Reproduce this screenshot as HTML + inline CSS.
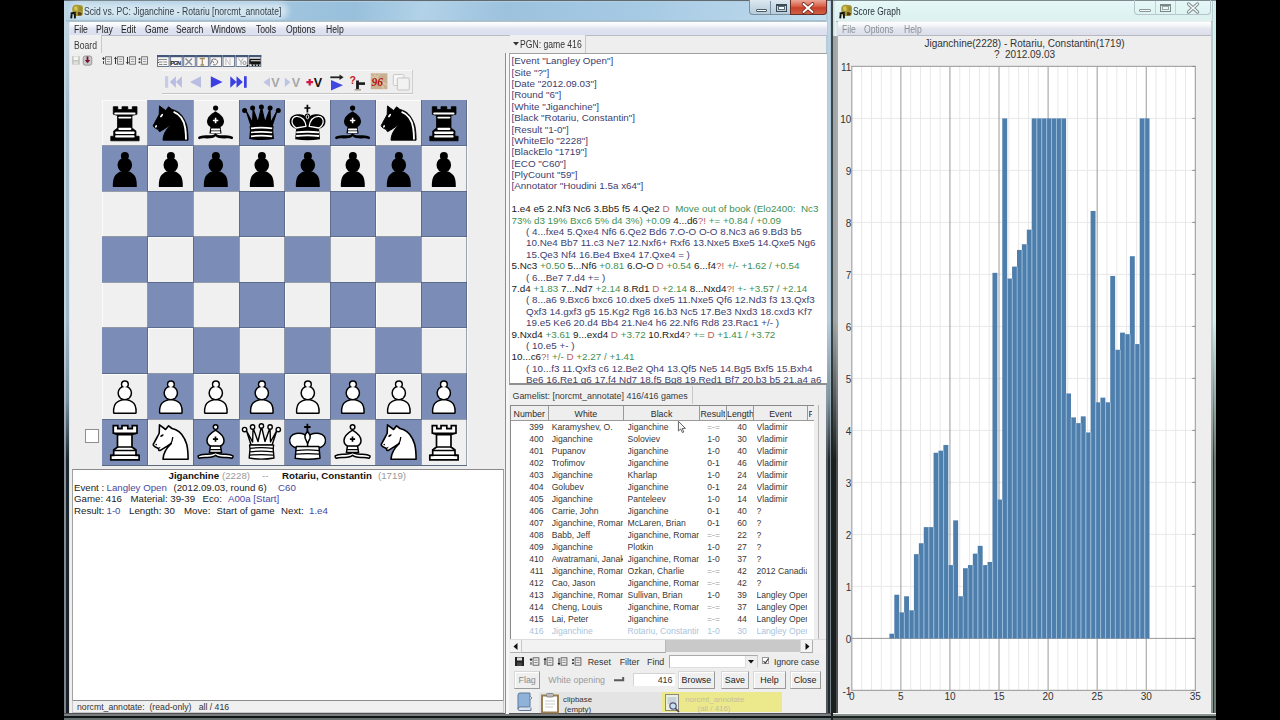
<!DOCTYPE html>
<html><head><meta charset="utf-8">
<style>
*{margin:0;padding:0;box-sizing:border-box}
html,body{width:1280px;height:720px;overflow:hidden;background:#000}
body{position:relative;font-family:"Liberation Sans",sans-serif;color:#222}
.a{position:absolute}
.t{position:absolute;white-space:nowrap;line-height:1.16}
svg{overflow:visible}
</style></head><body>
<div class="a" style="left:64px;top:0px;width:767px;height:720px;background:#a8c0d0;"></div>
<div class="a" style="left:64px;top:0px;width:2px;height:720px;background:linear-gradient(#c0d4e0 0,#c0d4e0 320px,#a8b4c0 400px,#8a8e98 460px,#7c8288 720px);"></div>
<div class="a" style="left:66px;top:0px;width:3px;height:720px;background:linear-gradient(#c8dce8 0,#b4cad8 60px,#a2bccc 110px,#9fb8c8 320px,#7890a0 400px,#1c2a30 460px,#1a2228 720px);"></div>
<div class="a" style="left:69px;top:0px;width:1px;height:720px;background:linear-gradient(#dce8ee,#dce4e8);"></div>
<div class="a" style="left:826px;top:0px;width:2px;height:720px;background:linear-gradient(#b4ccdc 0,#b4ccdc 320px,#8898a4 400px,#505558 460px,#505558 720px);"></div>
<div class="a" style="left:828px;top:0px;width:2px;height:720px;background:linear-gradient(#c8dce8 0,#b8d0e0 60px,#b8d0e0 320px,#7890a0 400px,#202830 460px,#202830 720px);"></div>
<div class="a" style="left:830px;top:0px;width:1px;height:720px;background:linear-gradient(#b0c8d8 0,#b0c8d8 320px,#98a8b0 400px,#7a8488 460px,#7a8488 720px);"></div>
<div class="a" style="left:64px;top:713px;width:767px;height:1px;background:#505050;"></div>
<div class="a" style="left:64px;top:714px;width:767px;height:2px;background:#7a7e80;"></div>
<div class="a" style="left:64px;top:716px;width:767px;height:2px;background:#0e1616;"></div>
<div class="a" style="left:64px;top:718px;width:767px;height:2px;background:#687070;"></div>
<div class="a" style="left:64px;top:0px;width:767px;height:1px;background:#5e6b72;"></div>
<div class="a" style="left:66px;top:1px;width:760px;height:1px;background:#b4cee0;"></div>
<div class="a" style="left:66px;top:2px;width:760px;height:19px;background:linear-gradient(100deg,#b4d2e6 0%,#a2c6e0 25%,#98c0dc 38%,#b2d2e8 47%,#9cc2de 58%,#a6cae4 75%,#b8d6ea 92%,#c4e0f0 100%);"></div>
<div class="a" style="left:70px;top:3px;width:218px;height:16px;background:#d4e6f0;filter:blur(3px);border-radius:8px"></div>
<svg class="a" style="left:68.5px;top:3px" width="16" height="16" viewBox="0 0 16 16"><path d="M4 3.2 Q5.5 1.4 8 1.8 L12.5 2.2 Q14.2 2.8 14 4.8 L13.8 11 Q13.6 12.6 12 12.8 L6.5 13 Q4.2 12.8 3.6 10.6 L3.2 6 Q3.2 4.2 4 3.2Z" fill="#a89838"/><path d="M5 4 Q6.5 2.8 8.2 3.4 L8.8 7.2 Q7 8.2 5.4 7.2Z" fill="#d6c650"/><path d="M9 9.2 Q11.5 8.6 13 10.6 L12.2 12.4 L8.8 12.4Z" fill="#5a3c18"/><path d="M10.5 3.5 L13 4.4 L12.6 8 L10.2 7.2Z" fill="#9a8a26"/><path d="M1.6 10.4 L6.8 9.8 M2.8 10.2 L2.2 15.4 M5.8 10 L6 15.4" stroke="#111" stroke-width="1.9" fill="none"/></svg>
<div class="t" style="left:84.3px;top:6.00px;font-size:10px;color:#34404a;transform:scaleX(0.86);transform-origin:0 0;">Scid vs. PC: Jiganchine - Rotariu [norcmt_annotate]</div>
<div class="a" style="left:749px;top:0px;width:78px;height:15px;background:linear-gradient(#dce8f0,#c8d8e4 50%,#b8ccdc);border:1px solid #7a8e9c;border-top:none;border-radius:0 0 4px 4px"></div>
<div class="a" style="left:790px;top:0px;width:37px;height:15px;background:linear-gradient(#eaa898,#d86048 45%,#c84028 55%,#d06048);border:1px solid #6a3028;border-top:none;border-radius:0 0 4px 0"></div>
<div class="a" style="left:770px;top:1px;width:1px;height:14px;background:#7890a0;"></div>
<div class="a" style="left:755.5px;top:8.5px;width:11px;height:3px;background:#fbfdff;border:1px solid #4a5a66;border-radius:1px"></div>
<div class="a" style="left:776px;top:3.5px;width:11px;height:8px;background:transparent;border:1px solid #3a4a56;border-top-width:2px"></div>
<div class="a" style="left:778px;top:6px;width:7px;height:4px;background:#f4f8fb;border:1px solid #5a6a76"></div>
<svg class="a" style="left:801px;top:3px" width="14" height="10" viewBox="0 0 14 10"><path d="M2.5 1 L11.5 9 M11.5 1 L2.5 9" stroke="#6a2418" stroke-width="3.6" stroke-linecap="round"/><path d="M2.5 1 L11.5 9 M11.5 1 L2.5 9" stroke="#fff" stroke-width="2" stroke-linecap="round"/></svg>
<div class="a" style="left:70px;top:21px;width:756px;height:692px;background:#eeeeee;"></div>
<div class="a" style="left:66px;top:19.5px;width:760px;height:2.5px;background:linear-gradient(#a4bccc,#b0c4d2);"></div>
<div class="a" style="left:70px;top:22px;width:757px;height:14px;background:linear-gradient(#ffffff,#f4f6fa 25%,#dfe2f0 55%,#dcdff0);border-bottom:1px solid #b8bcc4"></div>
<div class="t" style="left:73.7px;top:24.40px;font-size:10px;color:#1e1e1e;transform:scaleX(0.86);transform-origin:0 0;">File</div>
<div class="t" style="left:96px;top:24.40px;font-size:10px;color:#1e1e1e;transform:scaleX(0.86);transform-origin:0 0;">Play</div>
<div class="t" style="left:120.6px;top:24.40px;font-size:10px;color:#1e1e1e;transform:scaleX(0.86);transform-origin:0 0;">Edit</div>
<div class="t" style="left:144.5px;top:24.40px;font-size:10px;color:#1e1e1e;transform:scaleX(0.86);transform-origin:0 0;">Game</div>
<div class="t" style="left:176px;top:24.40px;font-size:10px;color:#1e1e1e;transform:scaleX(0.86);transform-origin:0 0;">Search</div>
<div class="t" style="left:211px;top:24.40px;font-size:10px;color:#1e1e1e;transform:scaleX(0.86);transform-origin:0 0;">Windows</div>
<div class="t" style="left:256.2px;top:24.40px;font-size:10px;color:#1e1e1e;transform:scaleX(0.86);transform-origin:0 0;">Tools</div>
<div class="t" style="left:285.7px;top:24.40px;font-size:10px;color:#1e1e1e;transform:scaleX(0.86);transform-origin:0 0;">Options</div>
<div class="t" style="left:325.5px;top:24.40px;font-size:10px;color:#1e1e1e;transform:scaleX(0.86);transform-origin:0 0;">Help</div>
<div class="a" style="left:831px;top:0px;width:2px;height:720px;background:linear-gradient(#3a4548 0,#3a4548 320px,#1a2020 460px,#1a2020 720px);"></div>
<div class="a" style="left:833px;top:0px;width:383px;height:720px;background:#c8dcdc;"></div>
<div class="a" style="left:833px;top:0px;width:3px;height:720px;background:linear-gradient(#a0a4a4 0,#a0a4a4 320px,#1a2020 460px,#1a2020 720px);"></div>
<div class="a" style="left:836px;top:0px;width:2px;height:720px;background:linear-gradient(#a8acac 0,#a8acac 320px,#505050 460px,#505050 720px);"></div>
<div class="a" style="left:1211px;top:0px;width:1.5px;height:720px;background:linear-gradient(#b8cccc 0,#b8cccc 320px,#8a9494 460px,#8a9494 720px);"></div>
<div class="a" style="left:1212.5px;top:0px;width:1.5px;height:720px;background:linear-gradient(#d8f4f4 0,#d8f4f4 320px,#283530 460px,#283530 720px);"></div>
<div class="a" style="left:1214px;top:0px;width:2px;height:720px;background:linear-gradient(#d0ecec 0,#d0ecec 320px,#6a7a70 460px,#6a7a70 720px);"></div>
<div class="a" style="left:833px;top:0px;width:5px;height:36px;background:linear-gradient(90deg,#c8d8d8,#e4f4f4 50%,#d0e0e0);"></div>
<div class="a" style="left:833px;top:713px;width:383px;height:1px;background:#f8f8f8;"></div>
<div class="a" style="left:833px;top:714px;width:383px;height:2px;background:#8a9292;"></div>
<div class="a" style="left:833px;top:716px;width:383px;height:2px;background:#1c2420;"></div>
<div class="a" style="left:833px;top:718px;width:383px;height:2px;background:#586060;"></div>
<div class="a" style="left:833px;top:0px;width:383px;height:1px;background:#7d8b90;"></div>
<div class="a" style="left:836px;top:1px;width:376px;height:20px;background:linear-gradient(#e6f8f8,#e0f4f4 50%,#dcf0f0);"></div>
<div class="a" style="left:836px;top:21px;width:376px;height:1px;background:#a8b8b8;"></div>
<svg class="a" style="left:837.5px;top:3px" width="16" height="16" viewBox="0 0 16 16"><path d="M4 3.2 Q5.5 1.4 8 1.8 L12.5 2.2 Q14.2 2.8 14 4.8 L13.8 11 Q13.6 12.6 12 12.8 L6.5 13 Q4.2 12.8 3.6 10.6 L3.2 6 Q3.2 4.2 4 3.2Z" fill="#a89838"/><path d="M5 4 Q6.5 2.8 8.2 3.4 L8.8 7.2 Q7 8.2 5.4 7.2Z" fill="#d6c650"/><path d="M9 9.2 Q11.5 8.6 13 10.6 L12.2 12.4 L8.8 12.4Z" fill="#5a3c18"/><path d="M10.5 3.5 L13 4.4 L12.6 8 L10.2 7.2Z" fill="#9a8a26"/><path d="M1.6 10.4 L6.8 9.8 M2.8 10.2 L2.2 15.4 M5.8 10 L6 15.4" stroke="#111" stroke-width="1.9" fill="none"/></svg>
<div class="t" style="left:852.5px;top:6.00px;font-size:10px;color:#2a3439;transform:scaleX(0.84);transform-origin:0 0;">Score Graph</div>
<div class="a" style="left:1134px;top:0px;width:77px;height:15px;background:transparent;border:1px solid #b4c4c8;border-top:none;border-radius:0 0 4px 4px"></div>
<div class="a" style="left:1154.5px;top:1px;width:1px;height:14px;background:#c0d0d4;"></div>
<div class="a" style="left:1175px;top:1px;width:1px;height:14px;background:#c0d0d4;"></div>
<div class="a" style="left:1138.5px;top:8.5px;width:12px;height:3px;background:#f4f8f8;border:1px solid #8a9898;border-radius:1px"></div>
<div class="a" style="left:1159.5px;top:3.5px;width:11px;height:8px;background:transparent;border:1px solid #7a8888;border-top-width:2px"></div>
<div class="a" style="left:1161.5px;top:6px;width:7px;height:4px;background:#f2f8f8;border:1px solid #9aa8a8"></div>
<svg class="a" style="left:1186px;top:3px" width="14" height="10" viewBox="0 0 14 10"><path d="M2.5 1 L11.5 9 M11.5 1 L2.5 9" stroke="#7d8a8a" stroke-width="3.4" stroke-linecap="round"/><path d="M2.5 1 L11.5 9 M11.5 1 L2.5 9" stroke="#f4f8f8" stroke-width="1.6" stroke-linecap="round"/></svg>
<div class="a" style="left:838px;top:21px;width:373px;height:692px;background:#eeeeee;"></div>
<div class="a" style="left:838px;top:22px;width:373px;height:14px;background:linear-gradient(#ffffff,#f4f6f8 25%,#e2e4ee 55%,#dcdfea);border-bottom:1px solid #b4b8c0"></div>
<div class="t" style="left:842px;top:24.00px;font-size:10px;color:#8a9196;transform:scaleX(0.86);transform-origin:0 0;">File</div>
<div class="t" style="left:864px;top:24.00px;font-size:10px;color:#8a9196;transform:scaleX(0.86);transform-origin:0 0;">Options</div>
<div class="t" style="left:904px;top:24.00px;font-size:10px;color:#8a9196;transform:scaleX(0.86);transform-origin:0 0;">Help</div>
<svg width="0" height="0" style="position:absolute"><defs>
<symbol id="br" viewBox="0 0 45.6 45.6"><path d="M8.8 40.8 L37.1 40.8 L37.1 36.3 L34 36.3 L34 31 L30 28 L30 15.5 L35 14.2 L35 6.7 L30.3 6.7 L30.3 9.6 L25.8 9.6 L25.8 6.7 L20 6.7 L20 9.6 L15.8 9.6 L15.8 6.7 L11.3 6.7 L11.3 14.2 L15.5 15.5 L15.5 28 L11.7 31 L11.7 36.3 L8.8 36.3 Z" fill="#000" stroke="#000" stroke-width="0.8" stroke-linejoin="round"/><rect x="12.3" y="12.4" width="21.2" height="2.1999999999999993" rx="0.8" fill="#fff"/><rect x="16.4" y="16.7" width="13.0" height="1.9000000000000021" rx="0.8" fill="#fff"/><rect x="16.4" y="27.8" width="13.0" height="2.099999999999998" rx="0.8" fill="#fff"/><rect x="13.2" y="31.4" width="19.400000000000002" height="2.5" rx="0.8" fill="#fff"/><rect x="13.2" y="35.3" width="19.400000000000002" height="2.3000000000000043" rx="0.8" fill="#fff"/></symbol>
<symbol id="wr" viewBox="0 0 45.6 45.6"><path d="M8.8 40.8 L37.1 40.8 L37.1 36.3 L34 36.3 L34 31 L30 28 L30 15.5 L35 14.2 L35 6.7 L30.3 6.7 L30.3 9.6 L25.8 9.6 L25.8 6.7 L20 6.7 L20 9.6 L15.8 9.6 L15.8 6.7 L11.3 6.7 L11.3 14.2 L15.5 15.5 L15.5 28 L11.7 31 L11.7 36.3 L8.8 36.3 Z" fill="#fff" stroke="#000" stroke-width="1.7" stroke-linejoin="miter"/><path d="M11.3 14.2 L35 14.2 M15.5 15.8 L30 15.8 M15.5 28 L30 28 M11.7 31.4 L34 31.4 M8.8 36.3 L37.1 36.3" stroke="#000" stroke-width="1.5" fill="none"/></symbol>
<symbol id="bn" viewBox="0 0 45.6 45.6"><path d="M15 40.2 C15.2 34 18 29.5 23.3 24.5 C20 26.5 15 30 12 31.5 C11 31.8 10.6 31 10.5 29.6 C8.5 28.8 6.2 27.8 5.4 26.4 C5 25.2 5.4 24.5 6.1 23.9 C8 20 10 17 11.2 14.3 L11.5 5.9 L17.6 10.5 L20.6 6.8 L24 9.5 C26 10 27 10.5 27.8 10.8 C32 12.5 36 17 38.7 25.2 C39.6 29 40.1 34 40.1 40.2 Z" fill="#000" stroke="#000" stroke-width="0.9" stroke-linejoin="round"/><path d="M25.6 11.8 C31.5 14 36 20 37.2 28 C37.8 32 38 36 38 39.4" stroke="#fff" stroke-width="1.9" fill="none"/><ellipse cx="13.6" cy="15.6" rx="0.9" ry="2.1" transform="rotate(40 13.6 15.6)" fill="#fff"/><ellipse cx="8" cy="26.4" rx="0.9" ry="1.4" transform="rotate(30 8 26.4)" fill="#fff"/></symbol>
<symbol id="wn" viewBox="0 0 45.6 45.6"><path d="M15 40.2 C15.2 34 18 29.5 23.3 24.5 C20 26.5 15 30 12 31.5 C11 31.8 10.6 31 10.5 29.6 C8.5 28.8 6.2 27.8 5.4 26.4 C5 25.2 5.4 24.5 6.1 23.9 C8 20 10 17 11.2 14.3 L11.5 5.9 L17.6 10.5 L20.6 6.8 L24 9.5 C26 10 27 10.5 27.8 10.8 C32 12.5 36 17 38.7 25.2 C39.6 29 40.1 34 40.1 40.2 Z" fill="#fff" stroke="#000" stroke-width="1.6" stroke-linejoin="round"/><path d="M24.8 18 C24.6 20.5 24 22.8 22.6 24.8" stroke="#000" stroke-width="1.3" fill="none"/><ellipse cx="14" cy="16.6" rx="0.9" ry="2" transform="rotate(55 14 16.6)" fill="#000"/><circle cx="8.2" cy="25.6" r="0.8" fill="#000"/><path d="M10.6 29.2 L12.3 28.4" stroke="#000" stroke-width="1"/></symbol>
<symbol id="bb" viewBox="0 0 45.6 45.6"><circle cx="22.6" cy="8.1" r="2.6" fill="#000"/><path d="M22.5 11.2 C17.5 14.2 14 17.5 14 21.6 C14 24.8 16 26.4 17.6 27 L27.4 27 C29 26.4 31 24.8 31 21.6 C31 17.5 27.5 14.2 22.5 11.2 Z" fill="#000"/><path d="M17.5 26.6 L27.5 26.6 L28.6 33.6 L16.4 33.6 Z" fill="#000"/><path d="M22.1 33.4 C20.8 35.5 17 35.1 12.5 35.2 C9.5 35.3 7 35.7 5.2 36.9 C5 37.8 5.4 38.8 6.2 39.3 C8 38.5 10 38.3 13 38.4 C17.5 38.5 21.3 38.1 22.6 36.3 C23.9 38.1 27.7 38.5 32.2 38.4 C35.2 38.3 37.2 38.5 39 39.3 C39.8 38.8 40.2 37.8 40 36.9 C38.2 35.7 35.7 35.3 32.7 35.2 C28.2 35.1 24.4 35.5 23.1 33.4 Z" fill="#000"/><path d="M22.6 17.8 L22.6 23.2 M19.9 20.5 L25.3 20.5" stroke="#fff" stroke-width="1.6"/><rect x="18" y="28.6" width="9.2" height="1.9" rx="0.7" fill="#fff"/><rect x="17.8" y="31.3" width="9.6" height="1.7" rx="0.7" fill="#fff"/></symbol>
<symbol id="wb" viewBox="0 0 45.6 45.6"><g fill="#fff" stroke="#000" stroke-width="1.5" stroke-linejoin="round"><path d="M22.1 33.4 C20.8 35.5 17 35.1 12.5 35.2 C9.5 35.3 7 35.7 5.2 36.9 C5 37.8 5.4 38.8 6.2 39.3 C8 38.5 10 38.3 13 38.4 C17.5 38.5 21.3 38.1 22.6 36.3 C23.9 38.1 27.7 38.5 32.2 38.4 C35.2 38.3 37.2 38.5 39 39.3 C39.8 38.8 40.2 37.8 40 36.9 C38.2 35.7 35.7 35.3 32.7 35.2 C28.2 35.1 24.4 35.5 23.1 33.4 Z"/><path d="M17.5 26.6 L27.5 26.6 L28.6 33.6 L16.4 33.6 Z"/><path d="M22.5 11.2 C17.5 14.2 14 17.5 14 21.6 C14 24.8 16 26.4 17.6 27 L27.4 27 C29 26.4 31 24.8 31 21.6 C31 17.5 27.5 14.2 22.5 11.2 Z"/><circle cx="22.6" cy="8.1" r="2.3"/></g><path d="M22.5 17.6 L22.5 22.8 M19.9 20.2 L25.1 20.2" stroke="#000" stroke-width="1.7"/><path d="M16.9 30.6 L28.3 30.6" stroke="#000" stroke-width="1.3"/></symbol>
<symbol id="bq" viewBox="0 0 45.6 45.6"><path d="M7.4 11.5 L12.2 26.2 L33 26.2 L37.8 11.5 L31.5 23 L31 9 L26 22.5 L22.5 7.5 L19 22.5 L14.1 9 L13.6 23 Z" fill="#000" stroke="#000" stroke-width="1.2" stroke-linejoin="round"/><path d="M10.6 26 L34.6 26 L34.2 30 L35 39 C27 40.5 18 40.5 10.2 39 L11 30 Z" fill="#000"/><circle cx="5.6" cy="10.6" r="2.5" fill="#000"/><circle cx="13.6" cy="8.0" r="2.5" fill="#000"/><circle cx="22.4" cy="6.9" r="2.5" fill="#000"/><circle cx="31.1" cy="8.0" r="2.5" fill="#000"/><circle cx="39.3" cy="10.6" r="2.5" fill="#000"/><path d="M12 28.3 C18 27.5 27 27.5 33.2 28.3" stroke="#fff" stroke-width="1.7" fill="none"/><path d="M12 32.5 C18 31.7 27 31.7 33.2 32.5" stroke="#fff" stroke-width="1.7" fill="none"/><path d="M12 36.3 C18 35.5 27 35.5 33.2 36.3" stroke="#fff" stroke-width="1.7" fill="none"/></symbol>
<symbol id="wq" viewBox="0 0 45.6 45.6"><g fill="#fff" stroke="#000" stroke-width="1.4" stroke-linejoin="round"><path d="M7.4 11.5 L12.2 26.2 L33 26.2 L37.8 11.5 L31.5 23 L31 9 L26 22.5 L22.5 7.5 L19 22.5 L14.1 9 L13.6 23 Z"/><path d="M10.6 26 L34.6 26 L34.2 30 L35 39 C27 40.5 18 40.5 10.2 39 L11 30 Z"/><circle cx="5.6" cy="10.6" r="2.2"/><circle cx="13.6" cy="8.0" r="2.2"/><circle cx="22.4" cy="6.9" r="2.2"/><circle cx="31.1" cy="8.0" r="2.2"/><circle cx="39.3" cy="10.6" r="2.2"/></g><path d="M11 29.3 C18 28.5 27 28.5 34.2 29.3" stroke="#000" stroke-width="1.3" fill="none"/><path d="M11 32.8 C18 31.999999999999996 27 31.999999999999996 34.2 32.8" stroke="#000" stroke-width="1.3" fill="none"/><path d="M11 36.2 C18 35.400000000000006 27 35.400000000000006 34.2 36.2" stroke="#000" stroke-width="1.3" fill="none"/></symbol>
<symbol id="bk" viewBox="0 0 45.6 45.6"><path d="M22.4 4.8 L22.4 12.5 M19.4 8 L25.4 8" stroke="#000" stroke-width="1.7"/><ellipse cx="22.5" cy="16.8" rx="2.8" ry="3.4" fill="#000"/><path d="M22.6 27 L22.6 19 C20.5 14.5 15.5 13.8 11 14.4 C6.2 15.2 3.8 19 5 23.6 C5.8 26.4 8.6 28 11 29 L34.2 29 C36.6 28 39.4 26.4 40.2 23.6 C41.4 19 39 15.2 34.2 14.4 C29.7 13.8 24.7 14.5 22.6 19 Z" fill="#000"/><path d="M11.2 27.6 L34 27.6 L35 39.3 C27 40.6 18 40.6 10.2 39.3 Z" fill="#000"/><path d="M21 26.4 C20.4 21.2 17.4 16.8 12 16.4 C8.3 16.2 6.4 19.5 7.1 22.8 C7.7 25.3 9.5 27 11 28 Z" stroke="#fff" stroke-width="1.3" fill="none" stroke-linejoin="round"/><path d="M24.2 26.4 C24.8 21.2 27.8 16.8 33.2 16.4 C36.9 16.2 38.8 19.5 38.1 22.8 C37.5 25.3 35.7 27 34.2 28 Z" stroke="#fff" stroke-width="1.3" fill="none" stroke-linejoin="round"/><ellipse cx="22.5" cy="16.9" rx="1.3" ry="1.9" fill="none" stroke="#fff" stroke-width="0.9"/><path d="M11.2 32.4 C18 31.599999999999998 27 31.599999999999998 34 32.4" stroke="#fff" stroke-width="1.8" fill="none"/><path d="M11.2 36.0 C18 35.2 27 35.2 34 36.0" stroke="#fff" stroke-width="1.8" fill="none"/></symbol>
<symbol id="wk" viewBox="0 0 45.6 45.6"><path d="M22.4 4.8 L22.4 13 M19.2 8 L25.6 8" stroke="#000" stroke-width="1.8"/><g fill="#fff" stroke="#000" stroke-width="1.5" stroke-linejoin="round"><path d="M22.6 27 L22.6 19 C20.5 14.5 15.5 13.8 11 14.4 C6.2 15.2 3.8 19 5 23.6 C5.8 26.4 8.6 28 11 29 L34.2 29 C36.6 28 39.4 26.4 40.2 23.6 C41.4 19 39 15.2 34.2 14.4 C29.7 13.8 24.7 14.5 22.6 19 Z"/><path d="M22.5 12.6 C20.5 14.5 19.6 17 20.2 19.2 L22.6 24.5 L25 19.2 C25.5 17 24.6 14.5 22.5 12.6 Z"/><path d="M11.2 27.6 L34 27.6 L35 39.3 C27 40.6 18 40.6 10.2 39.3 Z"/></g><path d="M10.8 31.6 C18 30.8 27 30.8 34.4 31.6" stroke="#000" stroke-width="1.2" fill="none"/><path d="M10.8 35.2 C18 34.400000000000006 27 34.400000000000006 34.4 35.2" stroke="#000" stroke-width="1.2" fill="none"/></symbol>
<symbol id="bp" viewBox="0 0 45.6 45.6"><g fill="#000"><circle cx="22.9" cy="10.0" r="4.0"/><circle cx="22.8" cy="19.0" r="7.3"/><path d="M10.90 41.00 C10.70 35.91 11.38 29.87 14.96 27.64 C17.59 25.58 19.50 25.10 22.85 25.10 C26.20 25.10 28.11 25.58 30.74 27.64 C34.32 29.87 35.00 35.91 34.80 41.00 Z"/></g></symbol>
<symbol id="wp" viewBox="0 0 45.6 45.6"><g fill="#000" stroke="#000" stroke-width="3.0" stroke-linejoin="round"><circle cx="22.9" cy="10.3" r="2.6"/><circle cx="22.8" cy="19.0" r="5.9"/><path d="M12.40 38.60 C12.20 34.76 12.82 30.20 15.95 28.52 C18.25 26.96 19.92 26.60 22.85 26.60 C25.78 26.60 27.45 26.96 29.75 28.52 C32.88 30.20 33.50 34.76 33.30 38.60 Z"/></g><g fill="#fff"><circle cx="22.9" cy="10.3" r="2.6"/><circle cx="22.8" cy="19.0" r="5.9"/><path d="M12.40 38.60 C12.20 34.76 12.82 30.20 15.95 28.52 C18.25 26.96 19.92 26.60 22.85 26.60 C25.78 26.60 27.45 26.96 29.75 28.52 C32.88 30.20 33.50 34.76 33.30 38.60 Z"/></g></symbol>
</defs></svg>
<div class="a" style="left:70px;top:35px;width:32px;height:18px;background:#f0f0f0;border-right:1px solid #c8c8c8"></div>
<div class="t" style="left:74px;top:39.60px;font-size:10px;color:#3a3a3a;transform:scaleX(0.86);transform-origin:0 0;">Board</div>
<svg class="a" style="left:71px;top:55px" width="22" height="11" viewBox="0 0 22 11"><rect x="1" y="1.2" width="7.8" height="8.4" fill="#c4c8c0"/><rect x="2.6" y="1.6" width="4.6" height="3.4" fill="#f4f4f4"/><rect x="2.8" y="6.6" width="4" height="2.6" fill="#e0e0e0"/><rect x="12.2" y="1" width="8.6" height="9.2" rx="2" fill="#c8c8c8" stroke="#8a8a8a" stroke-width="0.8"/><path d="M16.5 1.5 V7" stroke="#7a1030" stroke-width="1.8"/><path d="M13.8 5 L16.5 8.3 L19.2 5Z" fill="#7a1030"/></svg>
<svg class="a" style="left:101.6px;top:56px" width="10" height="9" viewBox="0 0 10 9"><rect x="3.6" y="0.8" width="5.8" height="7.4" fill="#f4f4f4" stroke="#666" stroke-width="0.9"/><path d="M4.8 3.2h3.4M4.8 5.6h3.4" stroke="#888" stroke-width="0.9"/><path d="M0.3 2.6h2.4M1.5 1.2v2.8M1.5 5.2v2.6" stroke="#333" stroke-width="1"/></svg>
<svg class="a" style="left:113.9px;top:56px" width="10" height="9" viewBox="0 0 10 9"><rect x="3.6" y="0.8" width="5.8" height="7.4" fill="#f4f4f4" stroke="#666" stroke-width="0.9"/><path d="M4.8 3.2h3.4M4.8 5.6h3.4" stroke="#888" stroke-width="0.9"/><path d="M1.5 8v-6" stroke="#333" stroke-width="1"/><path d="M0 3 L1.5 0.6 L3 3Z" fill="#333"/></svg>
<svg class="a" style="left:125.6px;top:56px" width="10" height="9" viewBox="0 0 10 9"><rect x="3.6" y="0.8" width="5.8" height="7.4" fill="#f4f4f4" stroke="#666" stroke-width="0.9"/><path d="M4.8 3.2h3.4M4.8 5.6h3.4" stroke="#888" stroke-width="0.9"/><path d="M1.5 1v6" stroke="#333" stroke-width="1"/><path d="M0 6 L1.5 8.4 L3 6Z" fill="#333"/></svg>
<svg class="a" style="left:138px;top:56px" width="10" height="9" viewBox="0 0 10 9"><rect x="3.6" y="0.8" width="5.8" height="7.4" fill="#f4f4f4" stroke="#666" stroke-width="0.9"/><path d="M4.8 3.2h3.4M4.8 5.6h3.4" stroke="#888" stroke-width="0.9"/><circle cx="1.5" cy="3" r="1" fill="#333"/><circle cx="1.5" cy="6.2" r="1" fill="#333"/></svg>
<svg class="a" style="left:157px;top:55px" width="106" height="12" viewBox="0 0 106 12"><rect x="0.5" y="0.5" width="11.6" height="11" fill="#f6f6f6" stroke="#6a7890" stroke-width="1"/><rect x="0.0" y="0" width="12.6" height="2.2" fill="#46587a"/><rect x="13.6" y="0.5" width="11.6" height="11" fill="#f6f6f6" stroke="#6a7890" stroke-width="1"/><rect x="13.1" y="0" width="12.6" height="2.2" fill="#46587a"/><rect x="26.7" y="0.5" width="11.6" height="11" fill="#f6f6f6" stroke="#6a7890" stroke-width="1"/><rect x="26.2" y="0" width="12.6" height="2.2" fill="#46587a"/><rect x="39.8" y="0.5" width="11.6" height="11" fill="#f6f6f6" stroke="#6a7890" stroke-width="1"/><rect x="39.3" y="0" width="12.6" height="2.2" fill="#46587a"/><rect x="52.9" y="0.5" width="11.6" height="11" fill="#f6f6f6" stroke="#6a7890" stroke-width="1"/><rect x="52.4" y="0" width="12.6" height="2.2" fill="#46587a"/><rect x="66.0" y="0.5" width="11.6" height="11" fill="#f6f6f6" stroke="#6a7890" stroke-width="1"/><rect x="65.5" y="0" width="12.6" height="2.2" fill="#46587a"/><rect x="79.1" y="0.5" width="11.6" height="11" fill="#f6f6f6" stroke="#6a7890" stroke-width="1"/><rect x="78.6" y="0" width="12.6" height="2.2" fill="#46587a"/><rect x="92.2" y="0.5" width="11.6" height="11" fill="#f6f6f6" stroke="#6a7890" stroke-width="1"/><rect x="91.7" y="0" width="12.6" height="2.2" fill="#46587a"/><path d="M2 4.5h8M2 7h3.5M6.5 7h3.5M2 9.5h3.5M6.5 9.5h3.5" stroke="#8a8a8a" stroke-width="1"/><path d="M1.3 4.5v5" stroke="#333" stroke-width="1" stroke-dasharray="1 1.5"/><text x="13.6" y="9.6" font-size="5.6" font-weight="bold" fill="#111" font-family="Liberation Sans" textLength="10.5">PGN</text><path d="M28.5 3.5 L35 10 M35 3.5 L28.5 10" stroke="#8a9098" stroke-width="1.5"/><path d="M42.7 3.5h5.2M45.3 3.5v6.5M43.5 10h3.6" stroke="#a89058" stroke-width="1.3"/><path d="M54.5 5 A3.5 3 0 1 1 56 9.8 M53.5 9 L55 5.5 L57 8" stroke="#777" stroke-width="1" fill="none"/><path d="M68.8 3.5v6.5M68.8 3.5 L73 10 V3.5" stroke="#c8c0c0" stroke-width="1" fill="none"/><path d="M81.5 3.5 L84 7 L86 3.5 M84 7v3" stroke="#aaa" stroke-width="1" fill="none"/><circle cx="87.5" cy="8" r="1.6" fill="none" stroke="#888" stroke-width="0.9"/><circle cx="90.4" cy="10.6" r="0.9" fill="#111"/><path d="M93 4.5h10.5M93 4.5v4.5M93 7h10.5" stroke="#111" stroke-width="1.4" fill="none"/><rect x="93.5" y="7" width="10" height="2.5" fill="#111"/><circle cx="95.5" cy="10.2" r="0.9" fill="#111"/><circle cx="98.5" cy="10.2" r="0.9" fill="#111"/><circle cx="101.5" cy="10.2" r="0.9" fill="#111"/></svg>
<div class="a" style="left:162px;top:69.5px;width:251px;height:1px;background:#f8f8f8;"></div>
<div class="a" style="left:162px;top:92.5px;width:251px;height:1px;background:#c4c4c4;"></div>
<div class="a" style="left:162px;top:93.5px;width:251px;height:1px;background:#fafafa;"></div>
<div class="a" style="left:412px;top:70px;width:1px;height:23px;background:#d0d0d0;"></div>
<svg class="a" style="left:162px;top:71px" width="251" height="23" viewBox="0 0 251 23"><rect x="3" y="5.2" width="3.2" height="11.6" fill="#c8cbe6"/><path d="M13.9 5.2 L7.8 11 L13.9 16.8Z M19.9 5.2 L13.9 11 L19.9 16.8Z" fill="#b9bde2"/><path d="M39 5.2 L28 11 L39 16.8Z" fill="#b9bde2"/><path d="M48.8 5.2 L60.5 11 L48.8 16.8Z" fill="#3c40e0"/><path d="M68.3 5.2 L74.5 11 L68.3 16.8Z M74.5 5.2 L80.8 11 L74.5 16.8Z" fill="#3c40e0"/><rect x="82" y="5.2" width="2.7" height="11.6" fill="#3c40e0"/><path d="M108 6.5 L101.3 11.2 L108 16Z" fill="#c0c4e4"/><text x="109.2" y="16.2" font-size="12.6" font-weight="bold" fill="#a8a8a8" font-family="Liberation Sans">V</text><path d="M122.8 6.5 L128.5 11.2 L122.8 16Z" fill="#c0c4e4"/><text x="129.8" y="16.2" font-size="12.6" font-weight="bold" fill="#a8a8a8" font-family="Liberation Sans">V</text><path d="M144.4 11.2h6.6 M147.7 8v6.6" stroke="#d01848" stroke-width="2.2"/><text x="151.7" y="16.2" font-size="12.6" font-weight="bold" fill="#111" font-family="Liberation Sans">V</text><path d="M168.3 6.3h10.5" stroke="#222" stroke-width="1.8"/><path d="M177.5 3.6 L181.6 6.3 L177.5 9Z" fill="#222"/><path d="M169 9 L181 14.3 L169 19.6Z" fill="#4048e4"/><text x="187.5" y="13.2" font-size="10.5" font-weight="bold" fill="#c41c1c" font-family="Liberation Sans">?</text><path d="M195.5 9.5v8.5" stroke="#1a1a1a" stroke-width="2.8"/><path d="M195.5 12.6h7.5" stroke="#1a1a1a" stroke-width="2.6"/><path d="M192.5 18.8h6.5" stroke="#a09a80" stroke-width="1.4"/><rect x="208.8" y="2.3" width="16.6" height="15.9" fill="#c9b090"/><path d="M209 5 L225 14 M212 2.5 L222 18 M209 12 L218 3" stroke="#d8c8a8" stroke-width="1.5"/><text x="209.6" y="14.5" font-size="11.5" font-weight="bold" font-style="italic" fill="#b41414" font-family="Liberation Serif">96</text><rect x="231.3" y="3.5" width="10.5" height="11" rx="1" fill="#f6f6f6" stroke="#c8c8c8"/><rect x="235.3" y="7" width="12" height="12" rx="1" fill="#f2f2f2" stroke="#c4c4c4"/></svg>
<div class="a" style="left:101.6px;top:99.5px;width:365.8px;height:366.2px;background:#5c6a80;"></div>
<div class="a" style="left:467.2px;top:100px;width:1.3px;height:366px;background:#fafafa;"></div>
<div class="a" style="left:102.35px;top:100.20px;width:45.95px;height:45.95px;background:#f0f0f0;box-shadow:inset 1px 1px 0 #fbfbfb"></div>
<div class="a" style="left:147.90px;top:100.20px;width:45.95px;height:45.95px;background:#7b8db6"></div>
<div class="a" style="left:193.45px;top:100.20px;width:45.95px;height:45.95px;background:#f0f0f0;box-shadow:inset 1px 1px 0 #fbfbfb"></div>
<div class="a" style="left:239.00px;top:100.20px;width:45.95px;height:45.95px;background:#7b8db6"></div>
<div class="a" style="left:284.55px;top:100.20px;width:45.95px;height:45.95px;background:#f0f0f0;box-shadow:inset 1px 1px 0 #fbfbfb"></div>
<div class="a" style="left:330.10px;top:100.20px;width:45.95px;height:45.95px;background:#7b8db6"></div>
<div class="a" style="left:375.65px;top:100.20px;width:45.95px;height:45.95px;background:#f0f0f0;box-shadow:inset 1px 1px 0 #fbfbfb"></div>
<div class="a" style="left:421.20px;top:100.20px;width:45.95px;height:45.95px;background:#7b8db6"></div>
<div class="a" style="left:102.35px;top:145.75px;width:45.95px;height:45.95px;background:#7b8db6"></div>
<div class="a" style="left:147.90px;top:145.75px;width:45.95px;height:45.95px;background:#f0f0f0;box-shadow:inset 1px 1px 0 #fbfbfb"></div>
<div class="a" style="left:193.45px;top:145.75px;width:45.95px;height:45.95px;background:#7b8db6"></div>
<div class="a" style="left:239.00px;top:145.75px;width:45.95px;height:45.95px;background:#f0f0f0;box-shadow:inset 1px 1px 0 #fbfbfb"></div>
<div class="a" style="left:284.55px;top:145.75px;width:45.95px;height:45.95px;background:#7b8db6"></div>
<div class="a" style="left:330.10px;top:145.75px;width:45.95px;height:45.95px;background:#f0f0f0;box-shadow:inset 1px 1px 0 #fbfbfb"></div>
<div class="a" style="left:375.65px;top:145.75px;width:45.95px;height:45.95px;background:#7b8db6"></div>
<div class="a" style="left:421.20px;top:145.75px;width:45.95px;height:45.95px;background:#f0f0f0;box-shadow:inset 1px 1px 0 #fbfbfb"></div>
<div class="a" style="left:102.35px;top:191.30px;width:45.95px;height:45.95px;background:#f0f0f0;box-shadow:inset 1px 1px 0 #fbfbfb"></div>
<div class="a" style="left:147.90px;top:191.30px;width:45.95px;height:45.95px;background:#7b8db6"></div>
<div class="a" style="left:193.45px;top:191.30px;width:45.95px;height:45.95px;background:#f0f0f0;box-shadow:inset 1px 1px 0 #fbfbfb"></div>
<div class="a" style="left:239.00px;top:191.30px;width:45.95px;height:45.95px;background:#7b8db6"></div>
<div class="a" style="left:284.55px;top:191.30px;width:45.95px;height:45.95px;background:#f0f0f0;box-shadow:inset 1px 1px 0 #fbfbfb"></div>
<div class="a" style="left:330.10px;top:191.30px;width:45.95px;height:45.95px;background:#7b8db6"></div>
<div class="a" style="left:375.65px;top:191.30px;width:45.95px;height:45.95px;background:#f0f0f0;box-shadow:inset 1px 1px 0 #fbfbfb"></div>
<div class="a" style="left:421.20px;top:191.30px;width:45.95px;height:45.95px;background:#7b8db6"></div>
<div class="a" style="left:102.35px;top:236.85px;width:45.95px;height:45.95px;background:#7b8db6"></div>
<div class="a" style="left:147.90px;top:236.85px;width:45.95px;height:45.95px;background:#f0f0f0;box-shadow:inset 1px 1px 0 #fbfbfb"></div>
<div class="a" style="left:193.45px;top:236.85px;width:45.95px;height:45.95px;background:#7b8db6"></div>
<div class="a" style="left:239.00px;top:236.85px;width:45.95px;height:45.95px;background:#f0f0f0;box-shadow:inset 1px 1px 0 #fbfbfb"></div>
<div class="a" style="left:284.55px;top:236.85px;width:45.95px;height:45.95px;background:#7b8db6"></div>
<div class="a" style="left:330.10px;top:236.85px;width:45.95px;height:45.95px;background:#f0f0f0;box-shadow:inset 1px 1px 0 #fbfbfb"></div>
<div class="a" style="left:375.65px;top:236.85px;width:45.95px;height:45.95px;background:#7b8db6"></div>
<div class="a" style="left:421.20px;top:236.85px;width:45.95px;height:45.95px;background:#f0f0f0;box-shadow:inset 1px 1px 0 #fbfbfb"></div>
<div class="a" style="left:102.35px;top:282.40px;width:45.95px;height:45.95px;background:#f0f0f0;box-shadow:inset 1px 1px 0 #fbfbfb"></div>
<div class="a" style="left:147.90px;top:282.40px;width:45.95px;height:45.95px;background:#7b8db6"></div>
<div class="a" style="left:193.45px;top:282.40px;width:45.95px;height:45.95px;background:#f0f0f0;box-shadow:inset 1px 1px 0 #fbfbfb"></div>
<div class="a" style="left:239.00px;top:282.40px;width:45.95px;height:45.95px;background:#7b8db6"></div>
<div class="a" style="left:284.55px;top:282.40px;width:45.95px;height:45.95px;background:#f0f0f0;box-shadow:inset 1px 1px 0 #fbfbfb"></div>
<div class="a" style="left:330.10px;top:282.40px;width:45.95px;height:45.95px;background:#7b8db6"></div>
<div class="a" style="left:375.65px;top:282.40px;width:45.95px;height:45.95px;background:#f0f0f0;box-shadow:inset 1px 1px 0 #fbfbfb"></div>
<div class="a" style="left:421.20px;top:282.40px;width:45.95px;height:45.95px;background:#7b8db6"></div>
<div class="a" style="left:102.35px;top:327.95px;width:45.95px;height:45.95px;background:#7b8db6"></div>
<div class="a" style="left:147.90px;top:327.95px;width:45.95px;height:45.95px;background:#f0f0f0;box-shadow:inset 1px 1px 0 #fbfbfb"></div>
<div class="a" style="left:193.45px;top:327.95px;width:45.95px;height:45.95px;background:#7b8db6"></div>
<div class="a" style="left:239.00px;top:327.95px;width:45.95px;height:45.95px;background:#f0f0f0;box-shadow:inset 1px 1px 0 #fbfbfb"></div>
<div class="a" style="left:284.55px;top:327.95px;width:45.95px;height:45.95px;background:#7b8db6"></div>
<div class="a" style="left:330.10px;top:327.95px;width:45.95px;height:45.95px;background:#f0f0f0;box-shadow:inset 1px 1px 0 #fbfbfb"></div>
<div class="a" style="left:375.65px;top:327.95px;width:45.95px;height:45.95px;background:#7b8db6"></div>
<div class="a" style="left:421.20px;top:327.95px;width:45.95px;height:45.95px;background:#f0f0f0;box-shadow:inset 1px 1px 0 #fbfbfb"></div>
<div class="a" style="left:102.35px;top:373.50px;width:45.95px;height:45.95px;background:#f0f0f0;box-shadow:inset 1px 1px 0 #fbfbfb"></div>
<div class="a" style="left:147.90px;top:373.50px;width:45.95px;height:45.95px;background:#7b8db6"></div>
<div class="a" style="left:193.45px;top:373.50px;width:45.95px;height:45.95px;background:#f0f0f0;box-shadow:inset 1px 1px 0 #fbfbfb"></div>
<div class="a" style="left:239.00px;top:373.50px;width:45.95px;height:45.95px;background:#7b8db6"></div>
<div class="a" style="left:284.55px;top:373.50px;width:45.95px;height:45.95px;background:#f0f0f0;box-shadow:inset 1px 1px 0 #fbfbfb"></div>
<div class="a" style="left:330.10px;top:373.50px;width:45.95px;height:45.95px;background:#7b8db6"></div>
<div class="a" style="left:375.65px;top:373.50px;width:45.95px;height:45.95px;background:#f0f0f0;box-shadow:inset 1px 1px 0 #fbfbfb"></div>
<div class="a" style="left:421.20px;top:373.50px;width:45.95px;height:45.95px;background:#7b8db6"></div>
<div class="a" style="left:102.35px;top:419.05px;width:45.95px;height:45.95px;background:#7b8db6"></div>
<div class="a" style="left:147.90px;top:419.05px;width:45.95px;height:45.95px;background:#f0f0f0;box-shadow:inset 1px 1px 0 #fbfbfb"></div>
<div class="a" style="left:193.45px;top:419.05px;width:45.95px;height:45.95px;background:#7b8db6"></div>
<div class="a" style="left:239.00px;top:419.05px;width:45.95px;height:45.95px;background:#f0f0f0;box-shadow:inset 1px 1px 0 #fbfbfb"></div>
<div class="a" style="left:284.55px;top:419.05px;width:45.95px;height:45.95px;background:#7b8db6"></div>
<div class="a" style="left:330.10px;top:419.05px;width:45.95px;height:45.95px;background:#f0f0f0;box-shadow:inset 1px 1px 0 #fbfbfb"></div>
<div class="a" style="left:375.65px;top:419.05px;width:45.95px;height:45.95px;background:#7b8db6"></div>
<div class="a" style="left:421.20px;top:419.05px;width:45.95px;height:45.95px;background:#f0f0f0;box-shadow:inset 1px 1px 0 #fbfbfb"></div>
<div class="a" style="left:466.0px;top:100.2px;width:1.1px;height:364.4px;background:rgba(70,80,105,0.5);"></div>
<div class="a" style="left:147.4px;top:100.2px;width:1px;height:364.4px;background:rgba(70,80,105,0.55);"></div>
<div class="a" style="left:102.35px;top:145.25px;width:364.4px;height:1px;background:rgba(70,80,105,0.55);"></div>
<div class="a" style="left:192.95px;top:100.2px;width:1px;height:364.4px;background:rgba(70,80,105,0.55);"></div>
<div class="a" style="left:102.35px;top:190.8px;width:364.4px;height:1px;background:rgba(70,80,105,0.55);"></div>
<div class="a" style="left:238.5px;top:100.2px;width:1px;height:364.4px;background:rgba(70,80,105,0.55);"></div>
<div class="a" style="left:102.35px;top:236.35px;width:364.4px;height:1px;background:rgba(70,80,105,0.55);"></div>
<div class="a" style="left:284.05px;top:100.2px;width:1px;height:364.4px;background:rgba(70,80,105,0.55);"></div>
<div class="a" style="left:102.35px;top:281.9px;width:364.4px;height:1px;background:rgba(70,80,105,0.55);"></div>
<div class="a" style="left:329.6px;top:100.2px;width:1px;height:364.4px;background:rgba(70,80,105,0.55);"></div>
<div class="a" style="left:102.35px;top:327.45px;width:364.4px;height:1px;background:rgba(70,80,105,0.55);"></div>
<div class="a" style="left:375.15px;top:100.2px;width:1px;height:364.4px;background:rgba(70,80,105,0.55);"></div>
<div class="a" style="left:102.35px;top:373.0px;width:364.4px;height:1px;background:rgba(70,80,105,0.55);"></div>
<div class="a" style="left:420.7px;top:100.2px;width:1px;height:364.4px;background:rgba(70,80,105,0.55);"></div>
<div class="a" style="left:102.35px;top:418.55px;width:364.4px;height:1px;background:rgba(70,80,105,0.55);"></div>
<svg class="a" style="left:102.35px;top:100.20px" width="45.6" height="45.6" viewBox="0 0 45.6 45.6"><use href="#br"/></svg>
<svg class="a" style="left:147.90px;top:100.20px" width="45.6" height="45.6" viewBox="0 0 45.6 45.6"><use href="#bn"/></svg>
<svg class="a" style="left:193.45px;top:100.20px" width="45.6" height="45.6" viewBox="0 0 45.6 45.6"><use href="#bb"/></svg>
<svg class="a" style="left:239.00px;top:100.20px" width="45.6" height="45.6" viewBox="0 0 45.6 45.6"><use href="#bq"/></svg>
<svg class="a" style="left:284.55px;top:100.20px" width="45.6" height="45.6" viewBox="0 0 45.6 45.6"><use href="#bk"/></svg>
<svg class="a" style="left:330.10px;top:100.20px" width="45.6" height="45.6" viewBox="0 0 45.6 45.6"><use href="#bb"/></svg>
<svg class="a" style="left:375.65px;top:100.20px" width="45.6" height="45.6" viewBox="0 0 45.6 45.6"><use href="#bn"/></svg>
<svg class="a" style="left:421.20px;top:100.20px" width="45.6" height="45.6" viewBox="0 0 45.6 45.6"><use href="#br"/></svg>
<svg class="a" style="left:102.35px;top:145.75px" width="45.6" height="45.6" viewBox="0 0 45.6 45.6"><use href="#bp"/></svg>
<svg class="a" style="left:147.90px;top:145.75px" width="45.6" height="45.6" viewBox="0 0 45.6 45.6"><use href="#bp"/></svg>
<svg class="a" style="left:193.45px;top:145.75px" width="45.6" height="45.6" viewBox="0 0 45.6 45.6"><use href="#bp"/></svg>
<svg class="a" style="left:239.00px;top:145.75px" width="45.6" height="45.6" viewBox="0 0 45.6 45.6"><use href="#bp"/></svg>
<svg class="a" style="left:284.55px;top:145.75px" width="45.6" height="45.6" viewBox="0 0 45.6 45.6"><use href="#bp"/></svg>
<svg class="a" style="left:330.10px;top:145.75px" width="45.6" height="45.6" viewBox="0 0 45.6 45.6"><use href="#bp"/></svg>
<svg class="a" style="left:375.65px;top:145.75px" width="45.6" height="45.6" viewBox="0 0 45.6 45.6"><use href="#bp"/></svg>
<svg class="a" style="left:421.20px;top:145.75px" width="45.6" height="45.6" viewBox="0 0 45.6 45.6"><use href="#bp"/></svg>
<svg class="a" style="left:102.35px;top:373.50px" width="45.6" height="45.6" viewBox="0 0 45.6 45.6"><use href="#wp"/></svg>
<svg class="a" style="left:147.90px;top:373.50px" width="45.6" height="45.6" viewBox="0 0 45.6 45.6"><use href="#wp"/></svg>
<svg class="a" style="left:193.45px;top:373.50px" width="45.6" height="45.6" viewBox="0 0 45.6 45.6"><use href="#wp"/></svg>
<svg class="a" style="left:239.00px;top:373.50px" width="45.6" height="45.6" viewBox="0 0 45.6 45.6"><use href="#wp"/></svg>
<svg class="a" style="left:284.55px;top:373.50px" width="45.6" height="45.6" viewBox="0 0 45.6 45.6"><use href="#wp"/></svg>
<svg class="a" style="left:330.10px;top:373.50px" width="45.6" height="45.6" viewBox="0 0 45.6 45.6"><use href="#wp"/></svg>
<svg class="a" style="left:375.65px;top:373.50px" width="45.6" height="45.6" viewBox="0 0 45.6 45.6"><use href="#wp"/></svg>
<svg class="a" style="left:421.20px;top:373.50px" width="45.6" height="45.6" viewBox="0 0 45.6 45.6"><use href="#wp"/></svg>
<svg class="a" style="left:102.35px;top:419.05px" width="45.6" height="45.6" viewBox="0 0 45.6 45.6"><use href="#wr"/></svg>
<svg class="a" style="left:147.90px;top:419.05px" width="45.6" height="45.6" viewBox="0 0 45.6 45.6"><use href="#wn"/></svg>
<svg class="a" style="left:193.45px;top:419.05px" width="45.6" height="45.6" viewBox="0 0 45.6 45.6"><use href="#wb"/></svg>
<svg class="a" style="left:239.00px;top:419.05px" width="45.6" height="45.6" viewBox="0 0 45.6 45.6"><use href="#wq"/></svg>
<svg class="a" style="left:284.55px;top:419.05px" width="45.6" height="45.6" viewBox="0 0 45.6 45.6"><use href="#wk"/></svg>
<svg class="a" style="left:330.10px;top:419.05px" width="45.6" height="45.6" viewBox="0 0 45.6 45.6"><use href="#wb"/></svg>
<svg class="a" style="left:375.65px;top:419.05px" width="45.6" height="45.6" viewBox="0 0 45.6 45.6"><use href="#wn"/></svg>
<svg class="a" style="left:421.20px;top:419.05px" width="45.6" height="45.6" viewBox="0 0 45.6 45.6"><use href="#wr"/></svg>
<div class="a" style="left:85px;top:429px;width:14px;height:14px;background:#fff;border:1px solid #8e8f8f"></div>
<div class="a" style="left:72px;top:469px;width:432px;height:232px;background:#fff;border:1px solid #a0a0a0;border-top-color:#8a8a8a"></div>
<div class="t" style="left:168.5px;top:470.37px;font-size:9.7px;color:#111;font-weight:bold;">Jiganchine</div>
<div class="t" style="left:222px;top:470.37px;font-size:9.7px;color:#9a9a9a;">(2228)</div>
<div class="t" style="left:262px;top:470.37px;font-size:9.7px;color:#9a9a9a;">--</div>
<div class="t" style="left:282px;top:470.37px;font-size:9.7px;color:#111;font-weight:bold;">Rotariu, Constantin</div>
<div class="t" style="left:378px;top:470.37px;font-size:9.7px;color:#9a9a9a;">(1719)</div>
<div class="t" style="left:74px;top:481.87px;font-size:9.7px;color:#222;">Event :</div>
<div class="t" style="left:106.5px;top:481.87px;font-size:9.7px;color:#4848a0;">Langley Open</div>
<div class="t" style="left:173.5px;top:481.87px;font-size:9.7px;color:#222;">(2012.09.03, round 6)</div>
<div class="t" style="left:278px;top:481.87px;font-size:9.7px;color:#4848a0;">C60</div>
<div class="t" style="left:74px;top:493.37px;font-size:9.7px;color:#222;">Game: 416</div>
<div class="t" style="left:130.5px;top:493.37px;font-size:9.7px;color:#222;">Material: 39-39</div>
<div class="t" style="left:202.5px;top:493.37px;font-size:9.7px;color:#222;">Eco:</div>
<div class="t" style="left:228px;top:493.37px;font-size:9.7px;color:#4848a0;">A00a [Start]</div>
<div class="t" style="left:74px;top:504.87px;font-size:9.7px;color:#222;">Result:</div>
<div class="t" style="left:106.5px;top:504.87px;font-size:9.7px;color:#4848a0;">1-0</div>
<div class="t" style="left:129px;top:504.87px;font-size:9.7px;color:#222;">Length: 30</div>
<div class="t" style="left:184px;top:504.87px;font-size:9.7px;color:#222;">Move:</div>
<div class="t" style="left:216.5px;top:504.87px;font-size:9.7px;color:#222;">Start of game</div>
<div class="t" style="left:281px;top:504.87px;font-size:9.7px;color:#222;">Next:</div>
<div class="t" style="left:309px;top:504.87px;font-size:9.7px;color:#4848a0;">1.e4</div>
<div class="a" style="left:72px;top:700px;width:432px;height:13px;background:#f0f0f0;border:1px solid #c8c8c8;border-top-color:#8c8c8c"></div>
<div class="t" style="left:77px;top:701.95px;font-size:8.7px;color:#333;">norcmt_annotate:&nbsp; (read-only)&nbsp;&nbsp; all / 416</div>
<div class="a" style="left:505px;top:53px;width:1px;height:661px;background:#8e8e8e;"></div>
<div class="a" style="left:506px;top:53px;width:3px;height:661px;background:#f6f6f6;"></div>
<div class="a" style="left:510px;top:35px;width:76px;height:18px;background:#f0f0f0;border-right:1px solid #c8c8c8"></div>
<svg class="a" style="left:513px;top:42px" width="6" height="4"><path d="M0 0h6L3 3.5Z" fill="#333"/></svg>
<div class="t" style="left:520px;top:39.40px;font-size:10px;color:#333;transform:scaleX(0.86);transform-origin:0 0;">PGN: game 416</div>
<div class="a" style="left:509px;top:53px;width:318px;height:332px;background:#fff;border-left:1px solid #a0a0a0;border-top:1px solid #a0a0a0;border-bottom:2px solid #909090;overflow:hidden"></div>
<div class="a" style="left:510px;top:54px;width:316px;height:330px;overflow:hidden"><div class="t" style="left:1.5px;top:1.19px;font-size:9.85px"><span style="color:#40406e">[Event "Langley Open"]</span></div>
<div class="t" style="left:1.5px;top:12.58px;font-size:9.85px"><span style="color:#40406e">[Site "?"]</span></div>
<div class="t" style="left:1.5px;top:23.97px;font-size:9.85px"><span style="color:#40406e">[Date "2012.09.03"]</span></div>
<div class="t" style="left:1.5px;top:35.36px;font-size:9.85px"><span style="color:#40406e">[Round "6"]</span></div>
<div class="t" style="left:1.5px;top:46.75px;font-size:9.85px"><span style="color:#40406e">[White "Jiganchine"]</span></div>
<div class="t" style="left:1.5px;top:58.14px;font-size:9.85px"><span style="color:#40406e">[Black "Rotariu, Constantin"]</span></div>
<div class="t" style="left:1.5px;top:69.53px;font-size:9.85px"><span style="color:#40406e">[Result "1-0"]</span></div>
<div class="t" style="left:1.5px;top:80.92px;font-size:9.85px"><span style="color:#40406e">[WhiteElo "2228"]</span></div>
<div class="t" style="left:1.5px;top:92.31px;font-size:9.85px"><span style="color:#40406e">[BlackElo "1719"]</span></div>
<div class="t" style="left:1.5px;top:103.70px;font-size:9.85px"><span style="color:#40406e">[ECO "C60"]</span></div>
<div class="t" style="left:1.5px;top:115.09px;font-size:9.85px"><span style="color:#40406e">[PlyCount "59"]</span></div>
<div class="t" style="left:1.5px;top:126.48px;font-size:9.85px"><span style="color:#40406e">[Annotator "Houdini 1.5a x64"]</span></div>
<div class="t" style="left:1.5px;top:149.26px;font-size:9.85px"><span style="color:#1a1a1a">1.e4 e5 2.Nf3 Nc6 3.Bb5 f5 4.Qe2 </span><span style="color:#b86060">D</span><span style="color:#3f9050">&nbsp; Move out of book (Elo2400:&nbsp; Nc3</span></div>
<div class="t" style="left:1.5px;top:160.65px;font-size:9.85px"><span style="color:#3f9050">73% d3 19% Bxc6 5% d4 3%) +0.09 </span><span style="color:#1a1a1a">4...d6</span><span style="color:#b86060">?!</span><span style="color:#3f9050"> += +0.84 / +0.09</span></div>
<div class="t" style="left:1.5px;top:172.04px;font-size:9.85px"><span style="color:#40406e"><span style="padding-left:14.5px"></span>( 4...fxe4 5.Qxe4 Nf6 6.Qe2 Bd6 7.O-O O-O 8.Nc3 a6 9.Bd3 b5</span></div>
<div class="t" style="left:1.5px;top:183.43px;font-size:9.85px"><span style="color:#40406e"><span style="padding-left:14.5px"></span>10.Ne4 Bb7 11.c3 Ne7 12.Nxf6+ Rxf6 13.Nxe5 Bxe5 14.Qxe5 Ng6</span></div>
<div class="t" style="left:1.5px;top:194.82px;font-size:9.85px"><span style="color:#40406e"><span style="padding-left:14.5px"></span>15.Qe3 Nf4 16.Be4 Bxe4 17.Qxe4 = )</span></div>
<div class="t" style="left:1.5px;top:206.21px;font-size:9.85px"><span style="color:#1a1a1a">5.Nc3 </span><span style="color:#3f9050">+0.50 </span><span style="color:#1a1a1a">5...Nf6 </span><span style="color:#3f9050">+0.81 </span><span style="color:#1a1a1a">6.O-O </span><span style="color:#b86060">D </span><span style="color:#3f9050">+0.54 </span><span style="color:#1a1a1a">6...f4</span><span style="color:#b86060">?!</span><span style="color:#3f9050"> +/- +1.62 / +0.54</span></div>
<div class="t" style="left:1.5px;top:217.60px;font-size:9.85px"><span style="color:#40406e"><span style="padding-left:14.5px"></span>( 6...Be7 7.d4 += )</span></div>
<div class="t" style="left:1.5px;top:228.99px;font-size:9.85px"><span style="color:#1a1a1a">7.d4 </span><span style="color:#3f9050">+1.83 </span><span style="color:#1a1a1a">7...Nd7 </span><span style="color:#3f9050">+2.14 </span><span style="color:#1a1a1a">8.Rd1 </span><span style="color:#b86060">D </span><span style="color:#3f9050">+2.14 </span><span style="color:#1a1a1a">8...Nxd4</span><span style="color:#b86060">?!</span><span style="color:#3f9050"> +- +3.57 / +2.14</span></div>
<div class="t" style="left:1.5px;top:240.38px;font-size:9.85px"><span style="color:#40406e"><span style="padding-left:14.5px"></span>( 8...a6 9.Bxc6 bxc6 10.dxe5 dxe5 11.Nxe5 Qf6 12.Nd3 f3 13.Qxf3</span></div>
<div class="t" style="left:1.5px;top:251.77px;font-size:9.85px"><span style="color:#40406e"><span style="padding-left:14.5px"></span>Qxf3 14.gxf3 g5 15.Kg2 Rg8 16.b3 Nc5 17.Be3 Nxd3 18.cxd3 Kf7</span></div>
<div class="t" style="left:1.5px;top:263.16px;font-size:9.85px"><span style="color:#40406e"><span style="padding-left:14.5px"></span>19.e5 Ke6 20.d4 Bb4 21.Ne4 h6 22.Nf6 Rd8 23.Rac1 +/- )</span></div>
<div class="t" style="left:1.5px;top:274.55px;font-size:9.85px"><span style="color:#1a1a1a">9.Nxd4 </span><span style="color:#3f9050">+3.61 </span><span style="color:#1a1a1a">9...exd4 </span><span style="color:#b86060">D </span><span style="color:#3f9050">+3.72 </span><span style="color:#1a1a1a">10.Rxd4</span><span style="color:#b86060">?</span><span style="color:#3f9050"> += </span><span style="color:#b86060">D </span><span style="color:#3f9050">+1.41 / +3.72</span></div>
<div class="t" style="left:1.5px;top:285.94px;font-size:9.85px"><span style="color:#40406e"><span style="padding-left:14.5px"></span>( 10.e5 +- )</span></div>
<div class="t" style="left:1.5px;top:297.33px;font-size:9.85px"><span style="color:#1a1a1a">10...c6</span><span style="color:#b86060">?!</span><span style="color:#3f9050"> +/- </span><span style="color:#b86060">D </span><span style="color:#3f9050">+2.27 / +1.41</span></div>
<div class="t" style="left:1.5px;top:308.72px;font-size:9.85px"><span style="color:#40406e"><span style="padding-left:14.5px"></span>( 10...f3 11.Qxf3 c6 12.Be2 Qh4 13.Qf5 Ne5 14.Bg5 Bxf5 15.Bxh4</span></div>
<div class="t" style="left:1.5px;top:320.11px;font-size:9.85px"><span style="color:#40406e"><span style="padding-left:14.5px"></span>Be6 16.Re1 g6 17.f4 Nd7 18.f5 Bg8 19.Red1 Bf7 20.b3 b5 21.a4 a6</span></div>
</div>
<div class="a" style="left:509px;top:386px;width:184px;height:18px;background:#f0f0f0;border-right:1px solid #c8c8c8"></div>
<div class="t" style="left:512.5px;top:391.24px;font-size:8.9px;color:#3a3a3a;">Gamelist: [norcmt_annotate] 416/416 games</div>
<div class="a" style="left:510px;top:405px;width:304px;height:234px;background:#fff;border-left:1px solid #8a8a8a;border-top:1px solid #8a8a8a"></div>
<div class="a" style="left:817.5px;top:405px;width:1.5px;height:235px;background:#b8b8b8;"></div>
<div class="a" style="left:511px;top:406px;width:303px;height:14.5px;background:#eeeeee;border-bottom:1px solid #9a9a9a"></div>
<div class="a" style="left:511.5px;top:406px;width:35.5px;height:14px;overflow:hidden"><div class="t" style="left:0;width:100%;text-align:center;top:2.8px;font-size:8.799999999999999px;color:#2a2a2a">Number</div></div>
<div class="a" style="left:547.5px;top:406px;width:1.2px;height:14.5px;background:#9a9a9a;"></div>
<div class="a" style="left:549px;top:406px;width:73.70000000000005px;height:14px;overflow:hidden"><div class="t" style="left:0;width:100%;text-align:center;top:2.8px;font-size:8.799999999999999px;color:#2a2a2a">White</div></div>
<div class="a" style="left:623.2px;top:406px;width:1.2px;height:14.5px;background:#9a9a9a;"></div>
<div class="a" style="left:624.7px;top:406px;width:73.69999999999993px;height:14px;overflow:hidden"><div class="t" style="left:0;width:100%;text-align:center;top:2.8px;font-size:8.799999999999999px;color:#2a2a2a">Black</div></div>
<div class="a" style="left:698.9px;top:406px;width:1.2px;height:14.5px;background:#9a9a9a;"></div>
<div class="a" style="left:700.4px;top:406px;width:24.600000000000023px;height:14px;overflow:hidden"><div class="t" style="left:0;width:100%;text-align:center;top:2.8px;font-size:8.799999999999999px;color:#2a2a2a">Result</div></div>
<div class="a" style="left:725.5px;top:406px;width:1.2px;height:14.5px;background:#9a9a9a;"></div>
<div class="a" style="left:727px;top:406px;width:25.5px;height:14px;overflow:hidden"><div class="t" style="left:0;width:100%;text-align:center;top:2.8px;font-size:8.799999999999999px;color:#2a2a2a">Length</div></div>
<div class="a" style="left:753.0px;top:406px;width:1.2px;height:14.5px;background:#9a9a9a;"></div>
<div class="a" style="left:754.5px;top:406px;width:52.0px;height:14px;overflow:hidden"><div class="t" style="left:0;width:100%;text-align:center;top:2.8px;font-size:8.799999999999999px;color:#2a2a2a">Event</div></div>
<div class="a" style="left:807.0px;top:406px;width:1.2px;height:14.5px;background:#9a9a9a;"></div>
<div class="a" style="left:808.5px;top:406px;width:3.5px;height:14px;overflow:hidden"><div class="t" style="left:0;width:100%;text-align:center;top:2.8px;font-size:8.799999999999999px;color:#2a2a2a">F</div></div>
<div class="a" style="left:511px;top:421px;width:302px;height:217px;overflow:hidden">
<div class="t" style="left:32.60000000000002px;transform:translateX(-100%);font-size:8.6px;color:#383838;top:2.44px">399</div><div class="a" style="left:40.700000000000045px;top:0.44px;width:71.79999999999995px;height:14px;overflow:hidden"><div class="t" style="left:0;top:2px;font-size:8.6px;color:#383838">Karamyshev, O.</div></div><div class="a" style="left:116.5px;top:0.44px;width:71.70000000000005px;height:14px;overflow:hidden"><div class="t" style="left:0;top:2px;font-size:8.6px;color:#383838">Jiganchine</div></div><div class="t" style="left:202.5px;transform:translateX(-50%);font-size:8.6px;color:#383838;top:2.44px;color:#a0a0a0">=-=</div><div class="t" style="left:235.79999999999995px;transform:translateX(-100%);font-size:8.6px;color:#383838;top:2.44px">40</div><div class="a" style="left:245.5px;top:0.44px;width:50.5px;height:14px;overflow:hidden"><div class="t" style="left:0;top:2px;font-size:8.6px;color:#383838">Vladimir</div></div>
<div class="t" style="left:32.60000000000002px;transform:translateX(-100%);font-size:8.6px;color:#383838;top:14.44px">400</div><div class="a" style="left:40.700000000000045px;top:12.44px;width:71.79999999999995px;height:14px;overflow:hidden"><div class="t" style="left:0;top:2px;font-size:8.6px;color:#383838">Jiganchine</div></div><div class="a" style="left:116.5px;top:12.44px;width:71.70000000000005px;height:14px;overflow:hidden"><div class="t" style="left:0;top:2px;font-size:8.6px;color:#383838">Soloviev</div></div><div class="t" style="left:202.5px;transform:translateX(-50%);font-size:8.6px;color:#383838;top:14.44px;color:#383838">1-0</div><div class="t" style="left:235.79999999999995px;transform:translateX(-100%);font-size:8.6px;color:#383838;top:14.44px">30</div><div class="a" style="left:245.5px;top:12.44px;width:50.5px;height:14px;overflow:hidden"><div class="t" style="left:0;top:2px;font-size:8.6px;color:#383838">Vladimir</div></div>
<div class="t" style="left:32.60000000000002px;transform:translateX(-100%);font-size:8.6px;color:#383838;top:26.44px">401</div><div class="a" style="left:40.700000000000045px;top:24.44px;width:71.79999999999995px;height:14px;overflow:hidden"><div class="t" style="left:0;top:2px;font-size:8.6px;color:#383838">Pupanov</div></div><div class="a" style="left:116.5px;top:24.44px;width:71.70000000000005px;height:14px;overflow:hidden"><div class="t" style="left:0;top:2px;font-size:8.6px;color:#383838">Jiganchine</div></div><div class="t" style="left:202.5px;transform:translateX(-50%);font-size:8.6px;color:#383838;top:26.44px;color:#383838">1-0</div><div class="t" style="left:235.79999999999995px;transform:translateX(-100%);font-size:8.6px;color:#383838;top:26.44px">40</div><div class="a" style="left:245.5px;top:24.44px;width:50.5px;height:14px;overflow:hidden"><div class="t" style="left:0;top:2px;font-size:8.6px;color:#383838">Vladimir</div></div>
<div class="t" style="left:32.60000000000002px;transform:translateX(-100%);font-size:8.6px;color:#383838;top:38.44px">402</div><div class="a" style="left:40.700000000000045px;top:36.44px;width:71.79999999999995px;height:14px;overflow:hidden"><div class="t" style="left:0;top:2px;font-size:8.6px;color:#383838">Trofimov</div></div><div class="a" style="left:116.5px;top:36.44px;width:71.70000000000005px;height:14px;overflow:hidden"><div class="t" style="left:0;top:2px;font-size:8.6px;color:#383838">Jiganchine</div></div><div class="t" style="left:202.5px;transform:translateX(-50%);font-size:8.6px;color:#383838;top:38.44px;color:#383838">0-1</div><div class="t" style="left:235.79999999999995px;transform:translateX(-100%);font-size:8.6px;color:#383838;top:38.44px">46</div><div class="a" style="left:245.5px;top:36.44px;width:50.5px;height:14px;overflow:hidden"><div class="t" style="left:0;top:2px;font-size:8.6px;color:#383838">Vladimir</div></div>
<div class="t" style="left:32.60000000000002px;transform:translateX(-100%);font-size:8.6px;color:#383838;top:50.44px">403</div><div class="a" style="left:40.700000000000045px;top:48.44px;width:71.79999999999995px;height:14px;overflow:hidden"><div class="t" style="left:0;top:2px;font-size:8.6px;color:#383838">Jiganchine</div></div><div class="a" style="left:116.5px;top:48.44px;width:71.70000000000005px;height:14px;overflow:hidden"><div class="t" style="left:0;top:2px;font-size:8.6px;color:#383838">Kharlap</div></div><div class="t" style="left:202.5px;transform:translateX(-50%);font-size:8.6px;color:#383838;top:50.44px;color:#383838">1-0</div><div class="t" style="left:235.79999999999995px;transform:translateX(-100%);font-size:8.6px;color:#383838;top:50.44px">24</div><div class="a" style="left:245.5px;top:48.44px;width:50.5px;height:14px;overflow:hidden"><div class="t" style="left:0;top:2px;font-size:8.6px;color:#383838">Vladimir</div></div>
<div class="t" style="left:32.60000000000002px;transform:translateX(-100%);font-size:8.6px;color:#383838;top:62.44px">404</div><div class="a" style="left:40.700000000000045px;top:60.44px;width:71.79999999999995px;height:14px;overflow:hidden"><div class="t" style="left:0;top:2px;font-size:8.6px;color:#383838">Golubev</div></div><div class="a" style="left:116.5px;top:60.44px;width:71.70000000000005px;height:14px;overflow:hidden"><div class="t" style="left:0;top:2px;font-size:8.6px;color:#383838">Jiganchine</div></div><div class="t" style="left:202.5px;transform:translateX(-50%);font-size:8.6px;color:#383838;top:62.44px;color:#383838">0-1</div><div class="t" style="left:235.79999999999995px;transform:translateX(-100%);font-size:8.6px;color:#383838;top:62.44px">24</div><div class="a" style="left:245.5px;top:60.44px;width:50.5px;height:14px;overflow:hidden"><div class="t" style="left:0;top:2px;font-size:8.6px;color:#383838">Vladimir</div></div>
<div class="t" style="left:32.60000000000002px;transform:translateX(-100%);font-size:8.6px;color:#383838;top:74.44px">405</div><div class="a" style="left:40.700000000000045px;top:72.44px;width:71.79999999999995px;height:14px;overflow:hidden"><div class="t" style="left:0;top:2px;font-size:8.6px;color:#383838">Jiganchine</div></div><div class="a" style="left:116.5px;top:72.44px;width:71.70000000000005px;height:14px;overflow:hidden"><div class="t" style="left:0;top:2px;font-size:8.6px;color:#383838">Panteleev</div></div><div class="t" style="left:202.5px;transform:translateX(-50%);font-size:8.6px;color:#383838;top:74.44px;color:#383838">1-0</div><div class="t" style="left:235.79999999999995px;transform:translateX(-100%);font-size:8.6px;color:#383838;top:74.44px">14</div><div class="a" style="left:245.5px;top:72.44px;width:50.5px;height:14px;overflow:hidden"><div class="t" style="left:0;top:2px;font-size:8.6px;color:#383838">Vladimir</div></div>
<div class="t" style="left:32.60000000000002px;transform:translateX(-100%);font-size:8.6px;color:#383838;top:86.44px">406</div><div class="a" style="left:40.700000000000045px;top:84.44px;width:71.79999999999995px;height:14px;overflow:hidden"><div class="t" style="left:0;top:2px;font-size:8.6px;color:#383838">Carrie, John</div></div><div class="a" style="left:116.5px;top:84.44px;width:71.70000000000005px;height:14px;overflow:hidden"><div class="t" style="left:0;top:2px;font-size:8.6px;color:#383838">Jiganchine</div></div><div class="t" style="left:202.5px;transform:translateX(-50%);font-size:8.6px;color:#383838;top:86.44px;color:#383838">0-1</div><div class="t" style="left:235.79999999999995px;transform:translateX(-100%);font-size:8.6px;color:#383838;top:86.44px">40</div><div class="a" style="left:245.5px;top:84.44px;width:50.5px;height:14px;overflow:hidden"><div class="t" style="left:0;top:2px;font-size:8.6px;color:#383838">?</div></div>
<div class="t" style="left:32.60000000000002px;transform:translateX(-100%);font-size:8.6px;color:#383838;top:98.44px">407</div><div class="a" style="left:40.700000000000045px;top:96.44px;width:71.79999999999995px;height:14px;overflow:hidden"><div class="t" style="left:0;top:2px;font-size:8.6px;color:#383838">Jiganchine, Roman</div></div><div class="a" style="left:116.5px;top:96.44px;width:71.70000000000005px;height:14px;overflow:hidden"><div class="t" style="left:0;top:2px;font-size:8.6px;color:#383838">McLaren, Brian</div></div><div class="t" style="left:202.5px;transform:translateX(-50%);font-size:8.6px;color:#383838;top:98.44px;color:#383838">0-1</div><div class="t" style="left:235.79999999999995px;transform:translateX(-100%);font-size:8.6px;color:#383838;top:98.44px">60</div><div class="a" style="left:245.5px;top:96.44px;width:50.5px;height:14px;overflow:hidden"><div class="t" style="left:0;top:2px;font-size:8.6px;color:#383838">?</div></div>
<div class="t" style="left:32.60000000000002px;transform:translateX(-100%);font-size:8.6px;color:#383838;top:110.44px">408</div><div class="a" style="left:40.700000000000045px;top:108.44px;width:71.79999999999995px;height:14px;overflow:hidden"><div class="t" style="left:0;top:2px;font-size:8.6px;color:#383838">Babb, Jeff</div></div><div class="a" style="left:116.5px;top:108.44px;width:71.70000000000005px;height:14px;overflow:hidden"><div class="t" style="left:0;top:2px;font-size:8.6px;color:#383838">Jiganchine, Roman</div></div><div class="t" style="left:202.5px;transform:translateX(-50%);font-size:8.6px;color:#383838;top:110.44px;color:#a0a0a0">=-=</div><div class="t" style="left:235.79999999999995px;transform:translateX(-100%);font-size:8.6px;color:#383838;top:110.44px">22</div><div class="a" style="left:245.5px;top:108.44px;width:50.5px;height:14px;overflow:hidden"><div class="t" style="left:0;top:2px;font-size:8.6px;color:#383838">?</div></div>
<div class="t" style="left:32.60000000000002px;transform:translateX(-100%);font-size:8.6px;color:#383838;top:122.44px">409</div><div class="a" style="left:40.700000000000045px;top:120.44px;width:71.79999999999995px;height:14px;overflow:hidden"><div class="t" style="left:0;top:2px;font-size:8.6px;color:#383838">Jiganchine</div></div><div class="a" style="left:116.5px;top:120.44px;width:71.70000000000005px;height:14px;overflow:hidden"><div class="t" style="left:0;top:2px;font-size:8.6px;color:#383838">Plotkin</div></div><div class="t" style="left:202.5px;transform:translateX(-50%);font-size:8.6px;color:#383838;top:122.44px;color:#383838">1-0</div><div class="t" style="left:235.79999999999995px;transform:translateX(-100%);font-size:8.6px;color:#383838;top:122.44px">27</div><div class="a" style="left:245.5px;top:120.44px;width:50.5px;height:14px;overflow:hidden"><div class="t" style="left:0;top:2px;font-size:8.6px;color:#383838">?</div></div>
<div class="t" style="left:32.60000000000002px;transform:translateX(-100%);font-size:8.6px;color:#383838;top:134.44px">410</div><div class="a" style="left:40.700000000000045px;top:132.44px;width:71.79999999999995px;height:14px;overflow:hidden"><div class="t" style="left:0;top:2px;font-size:8.6px;color:#383838">Awatramani, Janak</div></div><div class="a" style="left:116.5px;top:132.44px;width:71.70000000000005px;height:14px;overflow:hidden"><div class="t" style="left:0;top:2px;font-size:8.6px;color:#383838">Jiganchine, Roman</div></div><div class="t" style="left:202.5px;transform:translateX(-50%);font-size:8.6px;color:#383838;top:134.44px;color:#383838">1-0</div><div class="t" style="left:235.79999999999995px;transform:translateX(-100%);font-size:8.6px;color:#383838;top:134.44px">37</div><div class="a" style="left:245.5px;top:132.44px;width:50.5px;height:14px;overflow:hidden"><div class="t" style="left:0;top:2px;font-size:8.6px;color:#383838">?</div></div>
<div class="t" style="left:32.60000000000002px;transform:translateX(-100%);font-size:8.6px;color:#383838;top:146.44px">411</div><div class="a" style="left:40.700000000000045px;top:144.44px;width:71.79999999999995px;height:14px;overflow:hidden"><div class="t" style="left:0;top:2px;font-size:8.6px;color:#383838">Jiganchine, Roman</div></div><div class="a" style="left:116.5px;top:144.44px;width:71.70000000000005px;height:14px;overflow:hidden"><div class="t" style="left:0;top:2px;font-size:8.6px;color:#383838">Ozkan, Charlie</div></div><div class="t" style="left:202.5px;transform:translateX(-50%);font-size:8.6px;color:#383838;top:146.44px;color:#a0a0a0">=-=</div><div class="t" style="left:235.79999999999995px;transform:translateX(-100%);font-size:8.6px;color:#383838;top:146.44px">42</div><div class="a" style="left:245.5px;top:144.44px;width:50.5px;height:14px;overflow:hidden"><div class="t" style="left:0;top:2px;font-size:8.6px;color:#383838">2012 Canadian</div></div>
<div class="t" style="left:32.60000000000002px;transform:translateX(-100%);font-size:8.6px;color:#383838;top:158.44px">412</div><div class="a" style="left:40.700000000000045px;top:156.44px;width:71.79999999999995px;height:14px;overflow:hidden"><div class="t" style="left:0;top:2px;font-size:8.6px;color:#383838">Cao, Jason</div></div><div class="a" style="left:116.5px;top:156.44px;width:71.70000000000005px;height:14px;overflow:hidden"><div class="t" style="left:0;top:2px;font-size:8.6px;color:#383838">Jiganchine, Roman</div></div><div class="t" style="left:202.5px;transform:translateX(-50%);font-size:8.6px;color:#383838;top:158.44px;color:#a0a0a0">=-=</div><div class="t" style="left:235.79999999999995px;transform:translateX(-100%);font-size:8.6px;color:#383838;top:158.44px">42</div><div class="a" style="left:245.5px;top:156.44px;width:50.5px;height:14px;overflow:hidden"><div class="t" style="left:0;top:2px;font-size:8.6px;color:#383838">?</div></div>
<div class="t" style="left:32.60000000000002px;transform:translateX(-100%);font-size:8.6px;color:#383838;top:170.44px">413</div><div class="a" style="left:40.700000000000045px;top:168.44px;width:71.79999999999995px;height:14px;overflow:hidden"><div class="t" style="left:0;top:2px;font-size:8.6px;color:#383838">Jiganchine, Roman</div></div><div class="a" style="left:116.5px;top:168.44px;width:71.70000000000005px;height:14px;overflow:hidden"><div class="t" style="left:0;top:2px;font-size:8.6px;color:#383838">Sullivan, Brian</div></div><div class="t" style="left:202.5px;transform:translateX(-50%);font-size:8.6px;color:#383838;top:170.44px;color:#383838">1-0</div><div class="t" style="left:235.79999999999995px;transform:translateX(-100%);font-size:8.6px;color:#383838;top:170.44px">39</div><div class="a" style="left:245.5px;top:168.44px;width:50.5px;height:14px;overflow:hidden"><div class="t" style="left:0;top:2px;font-size:8.6px;color:#383838">Langley Open</div></div>
<div class="t" style="left:32.60000000000002px;transform:translateX(-100%);font-size:8.6px;color:#383838;top:182.44px">414</div><div class="a" style="left:40.700000000000045px;top:180.44px;width:71.79999999999995px;height:14px;overflow:hidden"><div class="t" style="left:0;top:2px;font-size:8.6px;color:#383838">Cheng, Louis</div></div><div class="a" style="left:116.5px;top:180.44px;width:71.70000000000005px;height:14px;overflow:hidden"><div class="t" style="left:0;top:2px;font-size:8.6px;color:#383838">Jiganchine, Roman</div></div><div class="t" style="left:202.5px;transform:translateX(-50%);font-size:8.6px;color:#383838;top:182.44px;color:#a0a0a0">=-=</div><div class="t" style="left:235.79999999999995px;transform:translateX(-100%);font-size:8.6px;color:#383838;top:182.44px">37</div><div class="a" style="left:245.5px;top:180.44px;width:50.5px;height:14px;overflow:hidden"><div class="t" style="left:0;top:2px;font-size:8.6px;color:#383838">Langley Open</div></div>
<div class="t" style="left:32.60000000000002px;transform:translateX(-100%);font-size:8.6px;color:#383838;top:194.44px">415</div><div class="a" style="left:40.700000000000045px;top:192.44px;width:71.79999999999995px;height:14px;overflow:hidden"><div class="t" style="left:0;top:2px;font-size:8.6px;color:#383838">Lai, Peter</div></div><div class="a" style="left:116.5px;top:192.44px;width:71.70000000000005px;height:14px;overflow:hidden"><div class="t" style="left:0;top:2px;font-size:8.6px;color:#383838">Jiganchine</div></div><div class="t" style="left:202.5px;transform:translateX(-50%);font-size:8.6px;color:#383838;top:194.44px;color:#a0a0a0">=-=</div><div class="t" style="left:235.79999999999995px;transform:translateX(-100%);font-size:8.6px;color:#383838;top:194.44px">44</div><div class="a" style="left:245.5px;top:192.44px;width:50.5px;height:14px;overflow:hidden"><div class="t" style="left:0;top:2px;font-size:8.6px;color:#383838">Langley Open</div></div>
<div class="t" style="left:32.60000000000002px;transform:translateX(-100%);font-size:8.6px;color:#a8c4dc;top:206.44px">416</div><div class="a" style="left:40.700000000000045px;top:204.44px;width:71.79999999999995px;height:14px;overflow:hidden"><div class="t" style="left:0;top:2px;font-size:8.6px;color:#a8c4dc">Jiganchine</div></div><div class="a" style="left:116.5px;top:204.44px;width:71.70000000000005px;height:14px;overflow:hidden"><div class="t" style="left:0;top:2px;font-size:8.6px;color:#a8c4dc">Rotariu, Constantin</div></div><div class="t" style="left:202.5px;transform:translateX(-50%);font-size:8.6px;color:#a8c4dc;top:206.44px;color:#a8c4dc">1-0</div><div class="t" style="left:235.79999999999995px;transform:translateX(-100%);font-size:8.6px;color:#a8c4dc;top:206.44px">30</div><div class="a" style="left:245.5px;top:204.44px;width:50.5px;height:14px;overflow:hidden"><div class="t" style="left:0;top:2px;font-size:8.6px;color:#a8c4dc">Langley Open</div></div>
</div>
<svg class="a" style="left:677px;top:420px" width="10" height="14" viewBox="0 0 10 14"><path d="M1.4 1.3 L1.4 11 L3.6 9 L5.4 12.6 L6.8 12 L5.2 8.5 L8.4 8.4 Z" fill="#f6f6f6" stroke="#555" stroke-width="0.9" stroke-linejoin="round"/></svg>
<div class="a" style="left:510px;top:639px;width:316px;height:14px;background:#f0f0f0;border-top:1px solid #dcdcdc"></div>
<div class="a" style="left:510px;top:640px;width:12px;height:12.5px;background:#f4f4f4;border-right:1px solid #c8c8c8;border-bottom:1px solid #b0b0b0"></div>
<svg class="a" style="left:513px;top:643px" width="5" height="7"><path d="M4.5 0 L0.5 3.5 L4.5 7Z" fill="#111"/></svg>
<div class="a" style="left:522px;top:640px;width:144px;height:12.5px;background:#f2f2f2;border-right:1px solid #b8b8b8;border-bottom:1px solid #a8a8a8"></div>
<div class="a" style="left:666.3px;top:640.4px;width:134px;height:12px;background:#c9c9c9;"></div>
<div class="a" style="left:800px;top:640px;width:12.5px;height:12.5px;background:#f4f4f4;border-left:1px solid #d8d8d8;border-bottom:1px solid #a8a8a8;border-right:1px solid #b0b0b0"></div>
<svg class="a" style="left:805px;top:643px" width="5" height="7"><path d="M0.5 0 L4.5 3.5 L0.5 7Z" fill="#111"/></svg>
<svg class="a" style="left:515px;top:657px" width="9" height="9"><rect x="0" y="0" width="9" height="9" fill="#222"/><rect x="2" y="0.5" width="5" height="3" fill="#ddd"/><rect x="2" y="5.5" width="5" height="3.5" fill="#444"/></svg>
<svg class="a" style="left:529px;top:657px" width="11" height="9" viewBox="0 0 10 9"><rect x="3.6" y="0.8" width="5.8" height="7.4" fill="#f4f4f4" stroke="#555" stroke-width="0.9"/><path d="M4.8 3.2h3.4M4.8 5.6h3.4" stroke="#777" stroke-width="0.9"/><path d="M0.3 2.6h2.4M1.5 1.2v2.8M1.5 5.2v2.6" stroke="#222" stroke-width="1"/></svg>
<svg class="a" style="left:543px;top:657px" width="11" height="9" viewBox="0 0 10 9"><rect x="3.6" y="0.8" width="5.8" height="7.4" fill="#f4f4f4" stroke="#555" stroke-width="0.9"/><path d="M4.8 3.2h3.4M4.8 5.6h3.4" stroke="#777" stroke-width="0.9"/><path d="M1.5 8v-6" stroke="#222" stroke-width="1"/><path d="M0 3 L1.5 0.6 L3 3Z" fill="#222"/></svg>
<svg class="a" style="left:557px;top:657px" width="11" height="9" viewBox="0 0 10 9"><rect x="3.6" y="0.8" width="5.8" height="7.4" fill="#f4f4f4" stroke="#555" stroke-width="0.9"/><path d="M4.8 3.2h3.4M4.8 5.6h3.4" stroke="#777" stroke-width="0.9"/><path d="M1.5 1v6" stroke="#222" stroke-width="1"/><path d="M0 6 L1.5 8.4 L3 6Z" fill="#222"/></svg>
<svg class="a" style="left:571px;top:657px" width="11" height="9" viewBox="0 0 10 9"><rect x="3.6" y="0.8" width="5.8" height="7.4" fill="#f4f4f4" stroke="#555" stroke-width="0.9"/><path d="M4.8 3.2h3.4M4.8 5.6h3.4" stroke="#777" stroke-width="0.9"/><circle cx="1.5" cy="3" r="1" fill="#222"/><circle cx="1.5" cy="6.2" r="1" fill="#222"/></svg>
<div class="t" style="left:587.7px;top:656.54px;font-size:8.9px;color:#333;">Reset</div>
<div class="t" style="left:619.7px;top:656.54px;font-size:8.9px;color:#333;">Filter</div>
<div class="t" style="left:647px;top:656.54px;font-size:8.9px;color:#333;">Find</div>
<div class="a" style="left:668.6px;top:654.5px;width:89px;height:13.5px;background:#fff;border:1px solid #aaa;border-right-color:#ccc;border-bottom-color:#ddd"></div>
<div class="a" style="left:745px;top:655.5px;width:12px;height:12px;background:#eeeeee;border-left:1px solid #ddd"></div>
<svg class="a" style="left:748px;top:660px" width="6" height="4"><path d="M0 0h6L3 3.5Z" fill="#111"/></svg>
<div class="a" style="left:762px;top:657px;width:7px;height:7px;background:#fff;border:1px solid #999"></div>
<svg class="a" style="left:763px;top:658px" width="6" height="6"><path d="M0.5 3 L2.3 5 L5.5 0.5" stroke="#333" stroke-width="1.1" fill="none"/></svg>
<div class="t" style="left:774px;top:656.98px;font-size:8.66px;color:#333;">Ignore case</div>
<div class="a" style="left:514.3px;top:671px;width:25.700000000000045px;height:17.5px;background:#efefef;border:1px solid #d8d8d8;border-right-color:#9a9a9a;border-bottom-color:#9a9a9a;box-shadow:inset 1px 1px 0 #fff"></div>
<div class="t" style="left:527.15px;top:674.66px;transform:translateX(-50%);font-size:8.9px;color:#8a8a8a">Flag</div>
<div class="t" style="left:548.3px;top:674.84px;font-size:8.9px;color:#9a9a9a;">White opening</div>
<svg class="a" style="left:613px;top:676px" width="12" height="6"><path d="M1 4.3 H10.2 V1" stroke="#5a5a5a" stroke-width="2" fill="none"/></svg>
<div class="a" style="left:632.5px;top:673.3px;width:42px;height:13px;background:#fff;border-left:1px solid #d4d4d4;border-top:1px solid #d4d4d4"></div>
<div class="t" style="left:672.5px;top:674.84px;font-size:8.9px;color:#333;transform-origin:100% 0;transform:translateX(-100%);">416</div>
<div class="a" style="left:677.5px;top:671px;width:37.799999999999955px;height:17.5px;background:#efefef;border:1px solid #d8d8d8;border-right-color:#9a9a9a;border-bottom-color:#9a9a9a;box-shadow:inset 1px 1px 0 #fff"></div>
<div class="t" style="left:696.4px;top:674.66px;transform:translateX(-50%);font-size:8.9px;color:#222">Browse</div>
<div class="a" style="left:721.2px;top:671px;width:27.5px;height:17.5px;background:#efefef;border:1px solid #d8d8d8;border-right-color:#9a9a9a;border-bottom-color:#9a9a9a;box-shadow:inset 1px 1px 0 #fff"></div>
<div class="t" style="left:734.95px;top:674.66px;transform:translateX(-50%);font-size:8.9px;color:#222">Save</div>
<div class="a" style="left:753.2px;top:671px;width:32.59999999999991px;height:17.5px;background:#efefef;border:1px solid #d8d8d8;border-right-color:#9a9a9a;border-bottom-color:#9a9a9a;box-shadow:inset 1px 1px 0 #fff"></div>
<div class="t" style="left:769.5px;top:674.66px;transform:translateX(-50%);font-size:8.9px;color:#222">Help</div>
<div class="a" style="left:789.5px;top:671px;width:31.200000000000045px;height:17.5px;background:#efefef;border:1px solid #d8d8d8;border-right-color:#9a9a9a;border-bottom-color:#9a9a9a;box-shadow:inset 1px 1px 0 #fff"></div>
<div class="t" style="left:805.1px;top:674.66px;transform:translateX(-50%);font-size:8.9px;color:#222">Close</div>
<div class="a" style="left:539.4px;top:691.7px;width:122.5px;height:21.5px;background:#e4e4e4;"></div>
<svg class="a" style="left:516px;top:692px" width="17" height="19"><path d="M2 3 Q2 1 4 1 L14 1 L14 15 L4 15 Q2 15 2 17Z" fill="#8fb2d8" stroke="#5a7a9a" stroke-width="1"/><path d="M2 17 Q2 18.5 4 18.5 L15 18.5 L15 15.5" fill="#dde" stroke="#5a7a9a" stroke-width="1"/><path d="M14 4 L16 6 L14 8" fill="#c8d8e8" stroke="#5a7a9a" stroke-width="0.8"/></svg>
<svg class="a" style="left:541px;top:693px" width="18" height="20"><rect x="1" y="2.5" width="16" height="17" fill="#fff" stroke="#9a8050" stroke-width="2"/><rect x="5.5" y="0.5" width="7" height="3.5" rx="1" fill="#bbb" stroke="#777" stroke-width="0.8"/><path d="M4 8h10M4 11h10M4 14h8" stroke="#ccc" stroke-width="1"/></svg>
<div class="t" style="left:563.1px;top:695.02px;font-size:7.9px;color:#333;">clipbase</div>
<div class="t" style="left:564.4px;top:704.82px;font-size:7.9px;color:#333;">(empty)</div>
<div class="a" style="left:661.9px;top:692.3px;width:120.2px;height:20.1px;background:#ece88c;"></div>
<svg class="a" style="left:665px;top:694px" width="16" height="19"><rect x="0.5" y="0.5" width="13" height="16" fill="#eeeedd" stroke="#8a8a80" stroke-width="1"/><rect x="2.5" y="3" width="9" height="7" fill="#c8d4dc"/><circle cx="8" cy="12" r="3.2" fill="#c8e0f0" stroke="#557" stroke-width="1.2"/><path d="M10.3 14.3 L14 18" stroke="#445" stroke-width="1.6"/></svg>
<div class="t" style="left:685.2px;top:694.82px;font-size:7.9px;color:#c4c0a0;">norcmt_annotate</div>
<div class="t" style="left:697.6px;top:704.42px;font-size:7.9px;color:#c4c0a0;">(all / 416)</div>
<div class="t" style="left:1024.5px;top:37.60px;font-size:10px;color:#333;transform:translateX(-50%);">Jiganchine(2228) - Rotariu, Constantin(1719)</div>
<div class="t" style="left:1024.5px;top:49.20px;font-size:10px;color:#333;transform:translateX(-50%);">?&nbsp;&nbsp;2012.09.03</div>
<svg class="a" style="left:0;top:0" width="1280" height="720" viewBox="0 0 1280 720"><rect x="851.8" y="66.39999999999998" width="343.52499999999986" height="624.0" fill="#fff"/><line x1="861.62" y1="66.39999999999998" x2="861.62" y2="690.4" stroke="#e8e8e8" stroke-width="1"/><line x1="871.43" y1="66.39999999999998" x2="871.43" y2="690.4" stroke="#e8e8e8" stroke-width="1"/><line x1="881.25" y1="66.39999999999998" x2="881.25" y2="690.4" stroke="#e8e8e8" stroke-width="1"/><line x1="891.06" y1="66.39999999999998" x2="891.06" y2="690.4" stroke="#e8e8e8" stroke-width="1"/><line x1="910.69" y1="66.39999999999998" x2="910.69" y2="690.4" stroke="#e8e8e8" stroke-width="1"/><line x1="920.50" y1="66.39999999999998" x2="920.50" y2="690.4" stroke="#e8e8e8" stroke-width="1"/><line x1="930.32" y1="66.39999999999998" x2="930.32" y2="690.4" stroke="#e8e8e8" stroke-width="1"/><line x1="940.13" y1="66.39999999999998" x2="940.13" y2="690.4" stroke="#e8e8e8" stroke-width="1"/><line x1="959.76" y1="66.39999999999998" x2="959.76" y2="690.4" stroke="#e8e8e8" stroke-width="1"/><line x1="969.58" y1="66.39999999999998" x2="969.58" y2="690.4" stroke="#e8e8e8" stroke-width="1"/><line x1="979.39" y1="66.39999999999998" x2="979.39" y2="690.4" stroke="#e8e8e8" stroke-width="1"/><line x1="989.21" y1="66.39999999999998" x2="989.21" y2="690.4" stroke="#e8e8e8" stroke-width="1"/><line x1="1008.84" y1="66.39999999999998" x2="1008.84" y2="690.4" stroke="#e8e8e8" stroke-width="1"/><line x1="1018.65" y1="66.39999999999998" x2="1018.65" y2="690.4" stroke="#e8e8e8" stroke-width="1"/><line x1="1028.47" y1="66.39999999999998" x2="1028.47" y2="690.4" stroke="#e8e8e8" stroke-width="1"/><line x1="1038.28" y1="66.39999999999998" x2="1038.28" y2="690.4" stroke="#e8e8e8" stroke-width="1"/><line x1="1057.91" y1="66.39999999999998" x2="1057.91" y2="690.4" stroke="#e8e8e8" stroke-width="1"/><line x1="1067.73" y1="66.39999999999998" x2="1067.73" y2="690.4" stroke="#e8e8e8" stroke-width="1"/><line x1="1077.54" y1="66.39999999999998" x2="1077.54" y2="690.4" stroke="#e8e8e8" stroke-width="1"/><line x1="1087.36" y1="66.39999999999998" x2="1087.36" y2="690.4" stroke="#e8e8e8" stroke-width="1"/><line x1="1106.99" y1="66.39999999999998" x2="1106.99" y2="690.4" stroke="#e8e8e8" stroke-width="1"/><line x1="1116.80" y1="66.39999999999998" x2="1116.80" y2="690.4" stroke="#e8e8e8" stroke-width="1"/><line x1="1126.62" y1="66.39999999999998" x2="1126.62" y2="690.4" stroke="#e8e8e8" stroke-width="1"/><line x1="1136.43" y1="66.39999999999998" x2="1136.43" y2="690.4" stroke="#e8e8e8" stroke-width="1"/><line x1="1156.07" y1="66.39999999999998" x2="1156.07" y2="690.4" stroke="#e8e8e8" stroke-width="1"/><line x1="1165.88" y1="66.39999999999998" x2="1165.88" y2="690.4" stroke="#e8e8e8" stroke-width="1"/><line x1="1175.69" y1="66.39999999999998" x2="1175.69" y2="690.4" stroke="#e8e8e8" stroke-width="1"/><line x1="1185.51" y1="66.39999999999998" x2="1185.51" y2="690.4" stroke="#e8e8e8" stroke-width="1"/><line x1="851.8" y1="690.40" x2="1195.3249999999998" y2="690.40" stroke="#e8e8e8" stroke-width="1"/><line x1="851.8" y1="586.40" x2="1195.3249999999998" y2="586.40" stroke="#e8e8e8" stroke-width="1"/><line x1="851.8" y1="534.40" x2="1195.3249999999998" y2="534.40" stroke="#e8e8e8" stroke-width="1"/><line x1="851.8" y1="482.40" x2="1195.3249999999998" y2="482.40" stroke="#e8e8e8" stroke-width="1"/><line x1="851.8" y1="430.40" x2="1195.3249999999998" y2="430.40" stroke="#e8e8e8" stroke-width="1"/><line x1="851.8" y1="378.40" x2="1195.3249999999998" y2="378.40" stroke="#e8e8e8" stroke-width="1"/><line x1="851.8" y1="326.40" x2="1195.3249999999998" y2="326.40" stroke="#e8e8e8" stroke-width="1"/><line x1="851.8" y1="274.40" x2="1195.3249999999998" y2="274.40" stroke="#e8e8e8" stroke-width="1"/><line x1="851.8" y1="222.40" x2="1195.3249999999998" y2="222.40" stroke="#e8e8e8" stroke-width="1"/><line x1="851.8" y1="170.40" x2="1195.3249999999998" y2="170.40" stroke="#e8e8e8" stroke-width="1"/><line x1="851.8" y1="118.40" x2="1195.3249999999998" y2="118.40" stroke="#e8e8e8" stroke-width="1"/><line x1="900.88" y1="66.39999999999998" x2="900.88" y2="690.4" stroke="#9a9a9a" stroke-width="1"/><line x1="949.95" y1="66.39999999999998" x2="949.95" y2="690.4" stroke="#9a9a9a" stroke-width="1"/><line x1="999.02" y1="66.39999999999998" x2="999.02" y2="690.4" stroke="#9a9a9a" stroke-width="1"/><line x1="1048.10" y1="66.39999999999998" x2="1048.10" y2="690.4" stroke="#9a9a9a" stroke-width="1"/><line x1="1097.17" y1="66.39999999999998" x2="1097.17" y2="690.4" stroke="#9a9a9a" stroke-width="1"/><line x1="1146.25" y1="66.39999999999998" x2="1146.25" y2="690.4" stroke="#9a9a9a" stroke-width="1"/><line x1="851.8" y1="638.4" x2="1195.3249999999998" y2="638.4" stroke="#9a9a9a" stroke-width="1"/><rect x="889.41" y="633.72" width="4.91" height="4.68" fill="#4e7eac"/><rect x="894.31" y="594.72" width="4.91" height="43.68" fill="#4e7eac"/><rect x="899.22" y="612.40" width="4.91" height="26.00" fill="#4e7eac"/><rect x="904.13" y="596.28" width="4.91" height="42.12" fill="#4e7eac"/><rect x="909.04" y="610.32" width="4.91" height="28.08" fill="#4e7eac"/><rect x="913.94" y="554.16" width="4.91" height="84.24" fill="#4e7eac"/><rect x="918.85" y="543.24" width="4.91" height="95.16" fill="#4e7eac"/><rect x="923.76" y="527.12" width="4.91" height="111.28" fill="#4e7eac"/><rect x="928.67" y="527.12" width="4.91" height="111.28" fill="#4e7eac"/><rect x="933.57" y="452.76" width="4.91" height="185.64" fill="#4e7eac"/><rect x="938.48" y="450.68" width="4.91" height="187.72" fill="#4e7eac"/><rect x="943.39" y="444.96" width="4.91" height="193.44" fill="#4e7eac"/><rect x="948.30" y="565.08" width="4.91" height="73.32" fill="#4e7eac"/><rect x="953.20" y="520.36" width="4.91" height="118.04" fill="#4e7eac"/><rect x="958.11" y="596.28" width="4.91" height="42.12" fill="#4e7eac"/><rect x="963.02" y="568.20" width="4.91" height="70.20" fill="#4e7eac"/><rect x="967.93" y="565.08" width="4.91" height="73.32" fill="#4e7eac"/><rect x="972.83" y="553.64" width="4.91" height="84.76" fill="#4e7eac"/><rect x="977.74" y="545.84" width="4.91" height="92.56" fill="#4e7eac"/><rect x="982.65" y="565.08" width="4.91" height="73.32" fill="#4e7eac"/><rect x="987.56" y="561.96" width="4.91" height="76.44" fill="#4e7eac"/><rect x="992.46" y="272.84" width="4.91" height="365.56" fill="#4e7eac"/><rect x="997.37" y="499.56" width="4.91" height="138.84" fill="#4e7eac"/><rect x="1002.28" y="118.40" width="4.91" height="520.00" fill="#4e7eac"/><rect x="1007.19" y="278.56" width="4.91" height="359.84" fill="#4e7eac"/><rect x="1012.09" y="266.60" width="4.91" height="371.80" fill="#4e7eac"/><rect x="1017.00" y="249.96" width="4.91" height="388.44" fill="#4e7eac"/><rect x="1021.91" y="244.24" width="4.91" height="394.16" fill="#4e7eac"/><rect x="1026.82" y="229.68" width="4.91" height="408.72" fill="#4e7eac"/><rect x="1031.72" y="118.40" width="4.91" height="520.00" fill="#4e7eac"/><rect x="1036.63" y="118.40" width="4.91" height="520.00" fill="#4e7eac"/><rect x="1041.54" y="118.40" width="4.91" height="520.00" fill="#4e7eac"/><rect x="1046.45" y="118.40" width="4.91" height="520.00" fill="#4e7eac"/><rect x="1051.35" y="118.40" width="4.91" height="520.00" fill="#4e7eac"/><rect x="1056.26" y="118.40" width="4.91" height="520.00" fill="#4e7eac"/><rect x="1061.17" y="118.40" width="4.91" height="520.00" fill="#4e7eac"/><rect x="1066.08" y="393.48" width="4.91" height="244.92" fill="#4e7eac"/><rect x="1070.98" y="417.40" width="4.91" height="221.00" fill="#4e7eac"/><rect x="1075.89" y="423.12" width="4.91" height="215.28" fill="#4e7eac"/><rect x="1080.80" y="416.36" width="4.91" height="222.04" fill="#4e7eac"/><rect x="1085.71" y="432.48" width="4.91" height="205.92" fill="#4e7eac"/><rect x="1090.61" y="210.96" width="4.91" height="427.44" fill="#4e7eac"/><rect x="1095.52" y="402.32" width="4.91" height="236.08" fill="#4e7eac"/><rect x="1100.43" y="397.64" width="4.91" height="240.76" fill="#4e7eac"/><rect x="1105.34" y="402.32" width="4.91" height="236.08" fill="#4e7eac"/><rect x="1110.24" y="275.96" width="4.91" height="362.44" fill="#4e7eac"/><rect x="1115.15" y="349.80" width="4.91" height="288.60" fill="#4e7eac"/><rect x="1120.06" y="332.64" width="4.91" height="305.76" fill="#4e7eac"/><rect x="1124.97" y="334.20" width="4.91" height="304.20" fill="#4e7eac"/><rect x="1129.87" y="256.20" width="4.91" height="382.20" fill="#4e7eac"/><rect x="1134.78" y="344.08" width="4.91" height="294.32" fill="#4e7eac"/><rect x="1139.69" y="118.40" width="4.91" height="520.00" fill="#4e7eac"/><rect x="1144.60" y="118.40" width="4.91" height="520.00" fill="#4e7eac"/><line x1="894.51" y1="633.72" x2="894.51" y2="638.40" stroke="#9dbedb" stroke-width="0.9"/><line x1="899.42" y1="612.40" x2="899.42" y2="638.40" stroke="#9dbedb" stroke-width="0.9"/><line x1="904.33" y1="612.40" x2="904.33" y2="638.40" stroke="#9dbedb" stroke-width="0.9"/><line x1="909.24" y1="610.32" x2="909.24" y2="638.40" stroke="#9dbedb" stroke-width="0.9"/><line x1="914.14" y1="610.32" x2="914.14" y2="638.40" stroke="#9dbedb" stroke-width="0.9"/><line x1="919.05" y1="554.16" x2="919.05" y2="638.40" stroke="#9dbedb" stroke-width="0.9"/><line x1="923.96" y1="543.24" x2="923.96" y2="638.40" stroke="#9dbedb" stroke-width="0.9"/><line x1="928.87" y1="527.12" x2="928.87" y2="638.40" stroke="#9dbedb" stroke-width="0.9"/><line x1="933.77" y1="527.12" x2="933.77" y2="638.40" stroke="#9dbedb" stroke-width="0.9"/><line x1="938.68" y1="452.76" x2="938.68" y2="638.40" stroke="#9dbedb" stroke-width="0.9"/><line x1="943.59" y1="450.68" x2="943.59" y2="638.40" stroke="#9dbedb" stroke-width="0.9"/><line x1="948.50" y1="565.08" x2="948.50" y2="638.40" stroke="#9dbedb" stroke-width="0.9"/><line x1="953.40" y1="565.08" x2="953.40" y2="638.40" stroke="#9dbedb" stroke-width="0.9"/><line x1="958.31" y1="596.28" x2="958.31" y2="638.40" stroke="#9dbedb" stroke-width="0.9"/><line x1="963.22" y1="596.28" x2="963.22" y2="638.40" stroke="#9dbedb" stroke-width="0.9"/><line x1="968.13" y1="568.20" x2="968.13" y2="638.40" stroke="#9dbedb" stroke-width="0.9"/><line x1="973.03" y1="565.08" x2="973.03" y2="638.40" stroke="#9dbedb" stroke-width="0.9"/><line x1="977.94" y1="553.64" x2="977.94" y2="638.40" stroke="#9dbedb" stroke-width="0.9"/><line x1="982.85" y1="565.08" x2="982.85" y2="638.40" stroke="#9dbedb" stroke-width="0.9"/><line x1="987.76" y1="565.08" x2="987.76" y2="638.40" stroke="#9dbedb" stroke-width="0.9"/><line x1="992.66" y1="561.96" x2="992.66" y2="638.40" stroke="#9dbedb" stroke-width="0.9"/><line x1="997.57" y1="499.56" x2="997.57" y2="638.40" stroke="#9dbedb" stroke-width="0.9"/><line x1="1002.48" y1="499.56" x2="1002.48" y2="638.40" stroke="#9dbedb" stroke-width="0.9"/><line x1="1007.39" y1="278.56" x2="1007.39" y2="638.40" stroke="#9dbedb" stroke-width="0.9"/><line x1="1012.29" y1="278.56" x2="1012.29" y2="638.40" stroke="#9dbedb" stroke-width="0.9"/><line x1="1017.20" y1="266.60" x2="1017.20" y2="638.40" stroke="#9dbedb" stroke-width="0.9"/><line x1="1022.11" y1="249.96" x2="1022.11" y2="638.40" stroke="#9dbedb" stroke-width="0.9"/><line x1="1027.02" y1="244.24" x2="1027.02" y2="638.40" stroke="#9dbedb" stroke-width="0.9"/><line x1="1031.92" y1="229.68" x2="1031.92" y2="638.40" stroke="#9dbedb" stroke-width="0.9"/><line x1="1036.83" y1="118.40" x2="1036.83" y2="638.40" stroke="#9dbedb" stroke-width="0.9"/><line x1="1041.74" y1="118.40" x2="1041.74" y2="638.40" stroke="#9dbedb" stroke-width="0.9"/><line x1="1046.65" y1="118.40" x2="1046.65" y2="638.40" stroke="#9dbedb" stroke-width="0.9"/><line x1="1051.55" y1="118.40" x2="1051.55" y2="638.40" stroke="#9dbedb" stroke-width="0.9"/><line x1="1056.46" y1="118.40" x2="1056.46" y2="638.40" stroke="#9dbedb" stroke-width="0.9"/><line x1="1061.37" y1="118.40" x2="1061.37" y2="638.40" stroke="#9dbedb" stroke-width="0.9"/><line x1="1066.28" y1="393.48" x2="1066.28" y2="638.40" stroke="#9dbedb" stroke-width="0.9"/><line x1="1071.18" y1="417.40" x2="1071.18" y2="638.40" stroke="#9dbedb" stroke-width="0.9"/><line x1="1076.09" y1="423.12" x2="1076.09" y2="638.40" stroke="#9dbedb" stroke-width="0.9"/><line x1="1081.00" y1="423.12" x2="1081.00" y2="638.40" stroke="#9dbedb" stroke-width="0.9"/><line x1="1085.91" y1="432.48" x2="1085.91" y2="638.40" stroke="#9dbedb" stroke-width="0.9"/><line x1="1090.81" y1="432.48" x2="1090.81" y2="638.40" stroke="#9dbedb" stroke-width="0.9"/><line x1="1095.72" y1="402.32" x2="1095.72" y2="638.40" stroke="#9dbedb" stroke-width="0.9"/><line x1="1100.63" y1="402.32" x2="1100.63" y2="638.40" stroke="#9dbedb" stroke-width="0.9"/><line x1="1105.54" y1="402.32" x2="1105.54" y2="638.40" stroke="#9dbedb" stroke-width="0.9"/><line x1="1110.44" y1="402.32" x2="1110.44" y2="638.40" stroke="#9dbedb" stroke-width="0.9"/><line x1="1115.35" y1="349.80" x2="1115.35" y2="638.40" stroke="#9dbedb" stroke-width="0.9"/><line x1="1120.26" y1="349.80" x2="1120.26" y2="638.40" stroke="#9dbedb" stroke-width="0.9"/><line x1="1125.17" y1="334.20" x2="1125.17" y2="638.40" stroke="#9dbedb" stroke-width="0.9"/><line x1="1130.07" y1="334.20" x2="1130.07" y2="638.40" stroke="#9dbedb" stroke-width="0.9"/><line x1="1134.98" y1="344.08" x2="1134.98" y2="638.40" stroke="#9dbedb" stroke-width="0.9"/><line x1="1139.89" y1="344.08" x2="1139.89" y2="638.40" stroke="#9dbedb" stroke-width="0.9"/><line x1="1144.80" y1="118.40" x2="1144.80" y2="638.40" stroke="#9dbedb" stroke-width="0.9"/><rect x="851.8" y="66.39999999999998" width="343.52499999999986" height="624.0" fill="none" stroke="#a6a6a6" stroke-width="1.2"/><line x1="1192.3249999999998" y1="690.40" x2="1195.3249999999998" y2="690.40" stroke="#888" stroke-width="1"/><line x1="1192.3249999999998" y1="638.40" x2="1195.3249999999998" y2="638.40" stroke="#888" stroke-width="1"/><line x1="1192.3249999999998" y1="586.40" x2="1195.3249999999998" y2="586.40" stroke="#888" stroke-width="1"/><line x1="1192.3249999999998" y1="534.40" x2="1195.3249999999998" y2="534.40" stroke="#888" stroke-width="1"/><line x1="1192.3249999999998" y1="482.40" x2="1195.3249999999998" y2="482.40" stroke="#888" stroke-width="1"/><line x1="1192.3249999999998" y1="430.40" x2="1195.3249999999998" y2="430.40" stroke="#888" stroke-width="1"/><line x1="1192.3249999999998" y1="378.40" x2="1195.3249999999998" y2="378.40" stroke="#888" stroke-width="1"/><line x1="1192.3249999999998" y1="326.40" x2="1195.3249999999998" y2="326.40" stroke="#888" stroke-width="1"/><line x1="1192.3249999999998" y1="274.40" x2="1195.3249999999998" y2="274.40" stroke="#888" stroke-width="1"/><line x1="1192.3249999999998" y1="222.40" x2="1195.3249999999998" y2="222.40" stroke="#888" stroke-width="1"/><line x1="1192.3249999999998" y1="170.40" x2="1195.3249999999998" y2="170.40" stroke="#888" stroke-width="1"/><line x1="1192.3249999999998" y1="118.40" x2="1195.3249999999998" y2="118.40" stroke="#888" stroke-width="1"/><line x1="1192.3249999999998" y1="66.40" x2="1195.3249999999998" y2="66.40" stroke="#888" stroke-width="1"/></svg>
<div class="t" style="left:851.4px;top:685.70px;font-size:10px;color:#333;transform-origin:100% 0;transform:translateX(-100%);">-1</div>
<div class="t" style="left:851.4px;top:633.70px;font-size:10px;color:#333;transform-origin:100% 0;transform:translateX(-100%);">0</div>
<div class="t" style="left:851.4px;top:581.70px;font-size:10px;color:#333;transform-origin:100% 0;transform:translateX(-100%);">1</div>
<div class="t" style="left:851.4px;top:529.70px;font-size:10px;color:#333;transform-origin:100% 0;transform:translateX(-100%);">2</div>
<div class="t" style="left:851.4px;top:477.70px;font-size:10px;color:#333;transform-origin:100% 0;transform:translateX(-100%);">3</div>
<div class="t" style="left:851.4px;top:425.70px;font-size:10px;color:#333;transform-origin:100% 0;transform:translateX(-100%);">4</div>
<div class="t" style="left:851.4px;top:373.70px;font-size:10px;color:#333;transform-origin:100% 0;transform:translateX(-100%);">5</div>
<div class="t" style="left:851.4px;top:321.70px;font-size:10px;color:#333;transform-origin:100% 0;transform:translateX(-100%);">6</div>
<div class="t" style="left:851.4px;top:269.70px;font-size:10px;color:#333;transform-origin:100% 0;transform:translateX(-100%);">7</div>
<div class="t" style="left:851.4px;top:217.70px;font-size:10px;color:#333;transform-origin:100% 0;transform:translateX(-100%);">8</div>
<div class="t" style="left:851.4px;top:165.70px;font-size:10px;color:#333;transform-origin:100% 0;transform:translateX(-100%);">9</div>
<div class="t" style="left:851.4px;top:113.70px;font-size:10px;color:#333;transform-origin:100% 0;transform:translateX(-100%);">10</div>
<div class="t" style="left:851.4px;top:61.70px;font-size:10px;color:#333;transform-origin:100% 0;transform:translateX(-100%);">11</div>
<div class="t" style="left:851.8px;top:691.40px;font-size:10px;color:#333;transform:translateX(-50%);">0</div>
<div class="t" style="left:900.875px;top:691.40px;font-size:10px;color:#333;transform:translateX(-50%);">5</div>
<div class="t" style="left:949.9499999999999px;top:691.40px;font-size:10px;color:#333;transform:translateX(-50%);">10</div>
<div class="t" style="left:999.025px;top:691.40px;font-size:10px;color:#333;transform:translateX(-50%);">15</div>
<div class="t" style="left:1048.1px;top:691.40px;font-size:10px;color:#333;transform:translateX(-50%);">20</div>
<div class="t" style="left:1097.175px;top:691.40px;font-size:10px;color:#333;transform:translateX(-50%);">25</div>
<div class="t" style="left:1146.25px;top:691.40px;font-size:10px;color:#333;transform:translateX(-50%);">30</div>
<div class="t" style="left:1195.3249999999998px;top:691.40px;font-size:10px;color:#333;transform:translateX(-50%);">35</div>
</body></html>
